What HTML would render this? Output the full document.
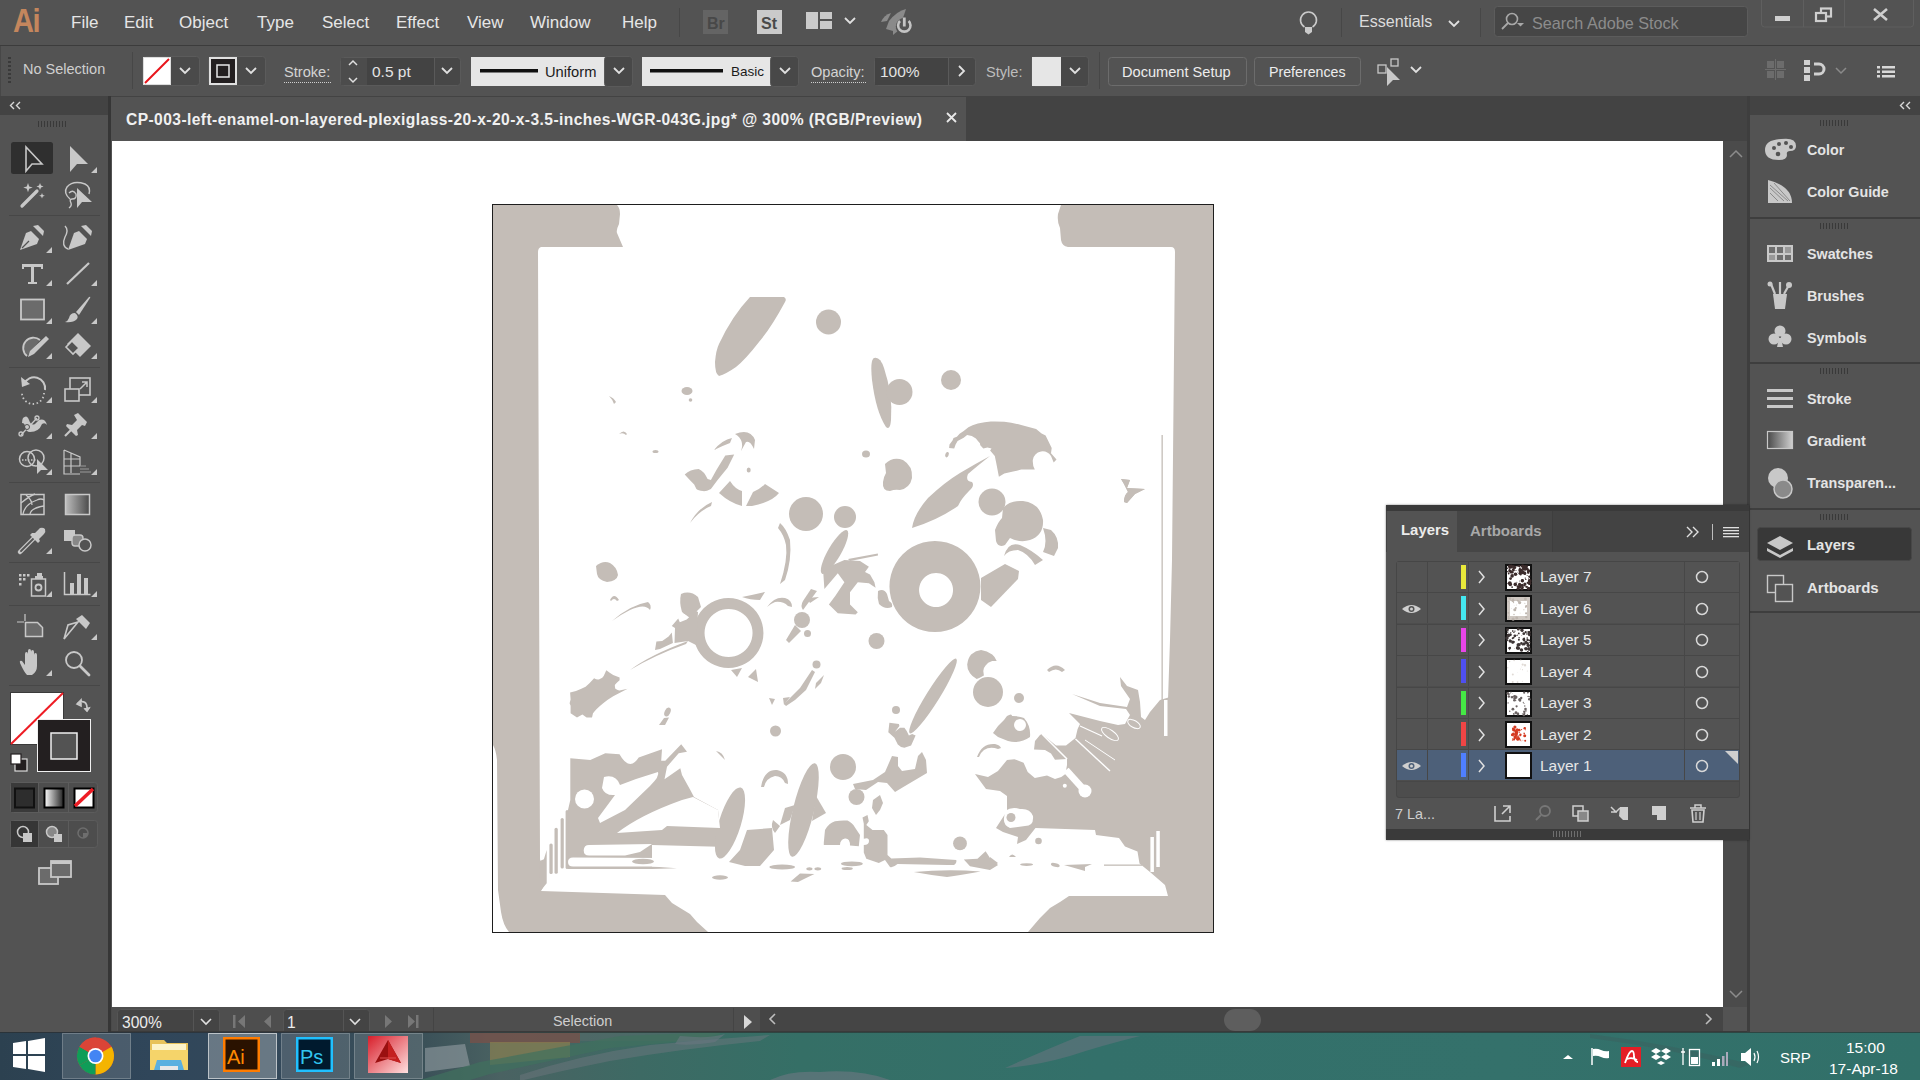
<!DOCTYPE html>
<html><head><meta charset="utf-8">
<style>
*{margin:0;padding:0;box-sizing:border-box}
html,body{width:1920px;height:1080px;overflow:hidden;background:#535353;font-family:"Liberation Sans",sans-serif;color:#d8d8d8}
.a{position:absolute}
.t{position:absolute;white-space:nowrap;line-height:1}
.menu{font-size:17px;color:#e6e6e6;top:14px}
.cb{font-size:14.6px;color:#d4d4d4}
.fld{position:absolute;background:#464646;border:1px solid #5c5c5c;border-radius:3px}
.dd{position:absolute;background:#484848}
.btn{position:absolute;border:1px solid #6a6a6a;border-radius:3px;background:#535353}
.dock{font-size:14.3px;font-weight:bold;color:#e4e4e4}
svg{position:absolute;overflow:visible}
</style></head><body>

<!-- MENU BAR -->
<div class="a" style="left:0;top:0;width:1920px;height:45px;background:#535353"></div>
<div class="a" style="left:0;top:45px;width:1920px;height:1px;background:#3c3c3c"></div>
<div class="t" style="left:13px;top:4px;font-size:30px;font-weight:bold;color:#c4865d;letter-spacing:-1.5px;transform:scale(0.97,1.1);transform-origin:0 0">Ai</div>
<div class="t menu" style="left:71px">File</div>
<div class="t menu" style="left:124px">Edit</div>
<div class="t menu" style="left:179px">Object</div>
<div class="t menu" style="left:257px">Type</div>
<div class="t menu" style="left:322px">Select</div>
<div class="t menu" style="left:396px">Effect</div>
<div class="t menu" style="left:467px">View</div>
<div class="t menu" style="left:530px">Window</div>
<div class="t menu" style="left:622px">Help</div>

<!-- CONTROL BAR -->
<div class="a" style="left:0;top:46px;width:1920px;height:50px;background:#535353"></div>
<div class="a" style="left:0;top:46px;width:1px;height:50px;background:#474747"></div>
<svg style="left:0;top:0" width="1920" height="100">
 <g fill="#3a3a3a"><rect x="8" y="57" width="3" height="2"/><rect x="8" y="61" width="3" height="2"/><rect x="8" y="65" width="3" height="2"/><rect x="8" y="69" width="3" height="2"/><rect x="8" y="73" width="3" height="2"/><rect x="8" y="77" width="3" height="2"/><rect x="8" y="81" width="3" height="2"/></g>
 <rect x="132" y="52" width="1" height="37" fill="#474747"/>
 <rect x="1099" y="52" width="1" height="37" fill="#474747"/>
 <!-- fill swatch -->
 <rect x="142.5" y="56.5" width="57" height="29" rx="3" fill="#4a4a4a" stroke="#5b5b5b"/>
 <rect x="143" y="57" width="28" height="28" fill="#dcdcdc"/>
 <rect x="144" y="58" width="26" height="26" fill="#ffffff"/>
 <line x1="145" y1="83" x2="169" y2="59" stroke="#e8141a" stroke-width="2"/>
 <path d="M180 68 l5 5 l5 -5" fill="none" stroke="#e0e0e0" stroke-width="1.8"/>
 <!-- stroke swatch -->
 <rect x="208.5" y="56.5" width="57" height="29" rx="3" fill="#4a4a4a" stroke="#5b5b5b"/>
 <rect x="209" y="57" width="28" height="28" fill="#e0e0e0"/>
 <rect x="211" y="59" width="24" height="24" fill="#231f20"/>
 <rect x="217" y="65" width="12" height="12" fill="none" stroke="#e8e8e8" stroke-width="1.5"/>
 <path d="M246 68 l5 5 l5 -5" fill="none" stroke="#e0e0e0" stroke-width="1.8"/>
 <!-- stroke label underline -->
 <line x1="284" y1="82.5" x2="331" y2="82.5" stroke="#cfcfcf" stroke-width="1" stroke-dasharray="1,1"/>
 <!-- stepper + field -->
 <rect x="340.5" y="57.5" width="120" height="28" rx="3" fill="#474747" stroke="#5a5a5a"/>
 <rect x="341" y="58" width="26" height="27" fill="#4c4c4c"/>
 <rect x="367" y="58" width="1" height="27" fill="#5a5a5a"/>
 <rect x="367" y="58" width="67" height="27" fill="#434343"/>
 <rect x="434" y="58" width="1" height="27" fill="#5a5a5a"/>
 <path d="M349 65 l4 -4 l4 4 M349 78 l4 4 l4 -4" fill="none" stroke="#e0e0e0" stroke-width="1.5"/>
 <path d="M442 68 l5 5 l5 -5" fill="none" stroke="#e0e0e0" stroke-width="1.8"/>
 <!-- uniform -->
 <rect x="471" y="57" width="134" height="29" fill="#e6e6e6"/>
 <rect x="604.5" y="56.5" width="28" height="30" rx="3" fill="#484848" stroke="#5a5a5a"/>
 <rect x="480" y="69" width="58" height="3.5" fill="#111"/>
 <path d="M614 68 l5 5 l5 -5" fill="none" stroke="#e0e0e0" stroke-width="1.8"/>
 <!-- basic -->
 <rect x="642" y="57" width="129" height="29" fill="#e6e6e6"/>
 <rect x="770.5" y="56.5" width="28" height="30" rx="3" fill="#484848" stroke="#5a5a5a"/>
 <rect x="650" y="69" width="73" height="3.5" fill="#111"/>
 <path d="M780 68 l5 5 l5 -5" fill="none" stroke="#e0e0e0" stroke-width="1.8"/>
 <line x1="811" y1="82.5" x2="866" y2="82.5" stroke="#cfcfcf" stroke-width="1" stroke-dasharray="1,1"/>
 <!-- opacity field -->
 <rect x="874.5" y="57.5" width="101" height="28" rx="3" fill="#474747" stroke="#5a5a5a"/>
 <rect x="875" y="58" width="73" height="27" fill="#434343"/>
 <rect x="948" y="58" width="1" height="27" fill="#5a5a5a"/>
 <path d="M959 66 l5 5 l-5 5" fill="none" stroke="#e0e0e0" stroke-width="1.8"/>
 <!-- style -->
 <rect x="1031.5" y="56.5" width="57" height="30" rx="3" fill="#484848" stroke="#5a5a5a"/>
 <rect x="1032" y="57" width="29" height="29" fill="#e6e6e6"/>
 <path d="M1070 68 l5 5 l5 -5" fill="none" stroke="#e0e0e0" stroke-width="1.8"/>
 <!-- buttons -->
 <rect x="1108.5" y="57.5" width="138" height="28" rx="3" fill="#535353" stroke="#6c6c6c"/>
 <rect x="1254.5" y="57.5" width="106" height="28" rx="3" fill="#535353" stroke="#6c6c6c"/>
 <!-- isolate icon -->
 <g fill="none" stroke="#c8c8c8" stroke-width="1.3"><rect x="1378" y="65" width="8" height="8"/><rect x="1391" y="59" width="7" height="7"/></g>
 <path d="M1387 67 l13 13 l-7 0 l-6 6 z" fill="#c8c8c8"/>
 <path d="M1411 67 l5 5 l5 -5" fill="none" stroke="#e0e0e0" stroke-width="1.8"/>
 <!-- right icons -->
 <g fill="#6c6c6c"><rect x="1767" y="61" width="7" height="7"/><rect x="1777" y="61" width="7" height="7"/><rect x="1767" y="71" width="7" height="7"/><rect x="1777" y="71" width="7" height="7"/><rect x="1765" y="69" width="21" height="1"/><rect x="1775" y="59" width="1" height="21"/></g>
 <g fill="#d0d0d0"><rect x="1804" y="60" width="6" height="5"/><rect x="1804" y="67" width="6" height="6"/><rect x="1804" y="75" width="6" height="6"/></g>
 <path d="M1814 64 h5 a5 5 0 0 1 0 10 h-5" fill="none" stroke="#d0d0d0" stroke-width="3"/>
 <path d="M1836 68 l5 5 l5 -5" fill="none" stroke="#8a8a8a" stroke-width="1.5"/>
 <g fill="#d8d8d8"><rect x="1877" y="66" width="3" height="2.5"/><rect x="1877" y="70.5" width="3" height="2.5"/><rect x="1877" y="75" width="3" height="2.5"/><rect x="1882" y="66" width="13" height="2.5"/><rect x="1882" y="70.5" width="13" height="2.5"/><rect x="1882" y="75" width="13" height="2.5"/></g>
 <!-- menu bar icons -->
 <rect x="679" y="8" width="1" height="29" fill="#474747"/>
 <rect x="703" y="10" width="25" height="24" fill="#646464"/>
 <text x="707" y="29" font-family="Liberation Sans" font-size="16" font-weight="bold" fill="#484848">Br</text>
 <rect x="757" y="10" width="25" height="24" fill="#cacaca"/>
 <text x="761" y="29" font-family="Liberation Sans" font-size="16" font-weight="bold" fill="#4a4a4a">St</text>
 <g fill="#cacaca"><rect x="806" y="12" width="12" height="17"/><rect x="820" y="12" width="12" height="7"/><rect x="820" y="21" width="12" height="8"/></g>
 <path d="M845 18 l5 5 l5 -5" fill="none" stroke="#e0e0e0" stroke-width="1.8"/>
 <path d="M906 9 Q897 11 889 21 L886 29 L893 31 Q902 24 906 9 Z" fill="#8a8a8a"/>
 <path d="M881 22 Q884 15 891 13 L887 21 Z" fill="#8a8a8a"/>
 <path d="M893 27 L899 30 L893 35 Z" fill="#8a8a8a"/>
 <circle cx="904.3" cy="26.4" r="8.5" fill="#535353"/>
 <path d="M900 21 A6.2 6.2 0 1 0 908.6 21" fill="none" stroke="#c4c4c4" stroke-width="2.6"/>
 <rect x="902.9" y="17.5" width="2.8" height="9" fill="#c4c4c4"/>
 <!-- lightbulb -->
 <path d="M1304.5 27 A8 8 0 1 1 1312.5 27" fill="none" stroke="#cacaca" stroke-width="1.6"/>
 <path d="M1305 27 h7 v5 l-3.5 2.5 l-3.5 -2.5 z" fill="#cacaca"/>
 <rect x="1341" y="8" width="1" height="29" fill="#474747"/>
 <path d="M1449 21 l5 5 l5 -5" fill="none" stroke="#e0e0e0" stroke-width="1.8"/>
 <rect x="1480" y="8" width="1" height="29" fill="#474747"/>
 <rect x="1494.5" y="6.5" width="253" height="30" rx="3" fill="#464646" stroke="#5c5c5c"/>
 <circle cx="1512" cy="19" r="5.5" fill="none" stroke="#a8a8a8" stroke-width="1.6"/>
 <line x1="1508" y1="23" x2="1502" y2="29" stroke="#a8a8a8" stroke-width="1.8"/>
 <path d="M1517 23 h7 l-3.5 3.5z" fill="#a8a8a8"/>
 <!-- window controls -->
 <path d="M1761.5 0 v24 a3 3 0 0 0 3 3 h146 a3 3 0 0 0 3 -3 v-24" fill="none" stroke="#5f5f5f"/>
 <rect x="1803" y="0" width="1" height="27" fill="#5f5f5f"/>
 <rect x="1844" y="0" width="1" height="27" fill="#5f5f5f"/>
 <rect x="1775" y="16" width="15" height="5" fill="#cfcfcf"/>
 <g fill="none" stroke="#cfcfcf" stroke-width="2.2"><rect x="1821" y="8.5" width="10" height="8"/><rect x="1816" y="13" width="10" height="8" fill="#535353"/></g>
 <path d="M1874 9 l13 11 M1887 9 l-13 11" stroke="#cfcfcf" stroke-width="2.6"/>
</svg>
<div class="t cb" style="left:23px;top:62px;font-size:14.5px;color:#cfcfcf">No Selection</div>
<div class="t cb" style="left:284px;top:65px">Stroke:</div>
<div class="t cb" style="left:372px;top:64px;font-size:15.5px;color:#e4e4e4">0.5 pt</div>
<div class="t cb" style="left:545px;top:65px;color:#1a1a1a;font-size:14.7px">Uniform</div>
<div class="t cb" style="left:731px;top:65px;color:#1a1a1a;font-size:13.5px">Basic</div>
<div class="t cb" style="left:811px;top:65px">Opacity:</div>
<div class="t cb" style="left:880px;top:64px;font-size:15.5px;color:#e4e4e4">100%</div>
<div class="t cb" style="left:986px;top:65px;color:#bdbdbd">Style:</div>
<div class="t cb" style="left:1122px;top:65px;color:#ededed">Document Setup</div>
<div class="t cb" style="left:1269px;top:65px;color:#ededed;font-size:14.2px">Preferences</div>
<div class="t" style="left:1359px;top:13px;font-size:16.1px;color:#dcdcdc">Essentials</div>
<div class="t" style="left:1532px;top:15px;font-size:16.2px;color:#8c8c8c">Search Adobe Stock</div>

<!-- LEFT TOOLS PANEL -->
<div class="a" style="left:0;top:96px;width:108px;height:19px;background:#434343"></div>
<div class="a" style="left:0;top:115px;width:108px;height:917px;background:#535353"></div>
<div class="a" style="left:108px;top:96px;width:3px;height:936px;background:#363636"></div>
<svg style="left:0;top:0" width="110" height="1032">
 <path d="M14 102 l-3.5 3.5 l3.5 3.5 M20 102 l-3.5 3.5 l3.5 3.5" fill="none" stroke="#d8d8d8" stroke-width="1.4"/>
 <g fill="#393939"><rect x="38" y="121" width="1" height="6"/><rect x="41" y="121" width="1" height="6"/><rect x="44" y="121" width="1" height="6"/><rect x="47" y="121" width="1" height="6"/><rect x="50" y="121" width="1" height="6"/><rect x="53" y="121" width="1" height="6"/><rect x="56" y="121" width="1" height="6"/><rect x="59" y="121" width="1" height="6"/><rect x="62" y="121" width="1" height="6"/><rect x="65" y="121" width="1" height="6"/></g>
 <g fill="#474747"><rect x="9" y="215" width="91" height="1"/><rect x="9" y="367" width="91" height="1"/><rect x="9" y="482" width="91" height="1"/><rect x="9" y="562" width="91" height="1"/><rect x="9" y="605" width="91" height="1"/><rect x="9" y="685" width="91" height="1"/></g>
 <rect x="11" y="142" width="42" height="32" rx="2.5" fill="#2f2f2f"/>
 <g fill="#c8c8c8" stroke="none">
  <!-- corner triangles -->
  <path d="M97 167 v6 h-6z M52 247 v6 h-6z M97 280 v6 h-6z M52 280 v6 h-6z M52 318 v6 h-6z M97 318 v6 h-6z M52 353 v6 h-6z M97 353 v6 h-6z M52 397 v6 h-6z M97 397 v6 h-6z M52 433 v6 h-6z M97 433 v6 h-6z M52 469 v6 h-6z M97 469 v6 h-6z M52 548 v6 h-6z M52 591 v6 h-6z M97 591 v6 h-6z M97 634 v6 h-6z M52 670 v6 h-6z"/>
 </g>
 <!-- selection -->
 <path d="M26 147 v24 l6 -7 h10 z" fill="none" stroke="#c8c8c8" stroke-width="1.6" stroke-linejoin="miter"/>
 <path d="M70 146 v26 l7 -8 h11 z" fill="#c8c8c8"/>
 <!-- magic wand -->
 <path d="M22 206 l15 -15" stroke="#c8c8c8" stroke-width="3.2" stroke-linecap="round"/>
 <path d="M28 183 l1.2 3.5 3.5 1 -3.5 1.2 -1.2 3.5 -1.2 -3.5 -3.5 -1.2 3.5 -1z M40 183 l1 2.5 2.5 1 -2.5 1 -1 2.5 -1 -2.5 -2.5 -1 2.5 -1z M42 193 l0.8 2 2 0.8 -2 0.8 -0.8 2 -0.8 -2 -2 -0.8 2 -0.8z" fill="#c8c8c8"/>
 <!-- lasso -->
 <path d="M70 199 q-7 -6 -3 -12 q6 -7 18 -3 q6 3 4 10 M69 193 q4 -4 7 1 q1 5 -4 5 q-3 0 -1 4 q1 3 -2 5" fill="none" stroke="#c8c8c8" stroke-width="1.4"/>
 <path d="M77 188 v20 l5 -6 h10 z" fill="#c8c8c8"/>
 <!-- pen -->
 <g fill="#c8c8c8"><path d="M33 226 l5 -1 l6 6 l-1 5 z"/><path d="M31 231 l8 8 l-2 5 l-17 6 l6 -17 z"/></g>
 <path d="M22 248 l7 -7" stroke="#535353" stroke-width="1.2"/>
 <!-- curvature pen -->
 <g fill="#c8c8c8"><path d="M84 226 l5 -1 l6 6 l-1 5 z" transform="translate(-3,0)"/><path d="M79 231 l8 8 l-2 5 l-17 6 l6 -17 z" transform="translate(0,0)"/></g>
 <path d="M65 226 q4 4 0 11 q-4 9 3 12" fill="none" stroke="#c8c8c8" stroke-width="1.4"/>
 <!-- type -->
 <path d="M22 264 h21 v5 h-2 v-2 h-7 v15 h3 v2 h-9 v-2 h3 v-15 h-7 v2 h-2z" fill="#c8c8c8"/>
 <!-- line -->
 <path d="M67 284 l22 -21" stroke="#c8c8c8" stroke-width="2.2"/>
 <!-- rect -->
 <rect x="21" y="299.5" width="23" height="20" fill="#6b6b6b" stroke="#c8c8c8" stroke-width="1.8"/>
 <!-- paintbrush -->
 <path d="M90 298 q1 -2 -1 -1 l-13 15 l3 3 z" fill="#c8c8c8"/>
 <path d="M75 313 q-5 0 -6 5 q-1 3 -4 4 q8 1 12 -3 q2 -3 -2 -6z" fill="#c8c8c8"/>
 <!-- shaper -->
 <path d="M27 356 a10 10 0 1 1 13 -16" fill="#6b6b6b" stroke="#c8c8c8" stroke-width="1.8"/>
 <path d="M46 336 l3 3 l-15 15 l-6 3 l2 -6z" fill="#c8c8c8"/>
 <!-- eraser -->
 <path d="M78 333 l13 13 l-11 11 l-13 -13z" fill="#c8c8c8"/>
 <path d="M66 347 l6 -6 l7 7 l-6 6z" fill="#535353" stroke="#c8c8c8" stroke-width="1.6"/>
 <!-- rotate -->
 <path d="M24 384 a11 11 0 0 1 21 6" fill="none" stroke="#c8c8c8" stroke-width="2"/>
 <path d="M21 377 l1 10 l8 -3z" fill="#c8c8c8"/>
 <path d="M44 393 a11 11 0 0 1 -22 0" fill="none" stroke="#c8c8c8" stroke-width="1.8" stroke-dasharray="1.5,2.5"/>
 <!-- scale -->
 <rect x="70" y="378" width="20" height="17" fill="none" stroke="#c8c8c8" stroke-width="1.6"/>
 <rect x="65" y="389" width="14" height="12" fill="#535353" stroke="#c8c8c8" stroke-width="1.6"/>
 <path d="M80 389 l7 -7 M82 382 h5 v5" fill="none" stroke="#c8c8c8" stroke-width="1.5"/>
 <!-- puppet/width -->
 <path d="M23 418 q4 -4 6 2 q2 6 6 4 l4 -4 q6 -2 8 5 q-2 -3 -5 -1 q-3 8 -12 8 q-4 0 -5 -5 q0 -4 -3 -4 q0 -3 1 -5z" fill="#c8c8c8"/>
 <path d="M21 435 l16 -17" stroke="#c8c8c8" stroke-width="1.3"/>
 <circle cx="21" cy="434" r="2" fill="none" stroke="#c8c8c8" stroke-width="1.3"/>
 <circle cx="37" cy="418" r="2" fill="none" stroke="#c8c8c8" stroke-width="1.3"/>
 <circle cx="27" cy="427" r="2.5" fill="none" stroke="#535353" stroke-width="1"/>
 <!-- pin -->
 <path d="M74 415 l4 -2 l9 9 l-2 4 l-3 -1 l-5 5 l1 5 l-2 1 l-10 -10 l1 -2 l5 1 l5 -5z" fill="#c8c8c8"/>
 <path d="M65 436 l6 -6" stroke="#c8c8c8" stroke-width="2.2"/>
 <!-- shape builder -->
 <circle cx="27" cy="459" r="7.5" fill="none" stroke="#c8c8c8" stroke-width="1.5"/>
 <circle cx="36" cy="458" r="8" fill="none" stroke="#c8c8c8" stroke-width="1.5"/>
 <path d="M22 460 h14" stroke="#c8c8c8" stroke-width="1.4" stroke-dasharray="1.5,1.5"/>
 <path d="M37 459 v15 l4 -4 h7z" fill="#c8c8c8"/>
 <!-- perspective -->
 <path d="M64 450 v24 h16 M64 450 l16 7 v9 M64 459 h16 M64 466 h16 M71 453 v20" fill="none" stroke="#c8c8c8" stroke-width="1.2"/>
 <path d="M80 466 h6 M80 469 h9 M80 472 h11" stroke="#9a9a9a" stroke-width="1"/>
 <!-- mesh -->
 <rect x="21" y="494.5" width="23" height="20" fill="none" stroke="#c8c8c8" stroke-width="1.5"/>
 <path d="M21 503 q10 -8 14 -9 M23 514 q2 -10 14 -14 q4 -2 7 0 M30 514 q1 -6 14 -8 M26 495 q6 5 6 10" fill="none" stroke="#c8c8c8" stroke-width="1.3"/>
 <!-- gradient -->
 <defs><linearGradient id="tg" x1="0" x2="1"><stop offset="0" stop-color="#bdbdbd"/><stop offset="1" stop-color="#4a4a4a"/></linearGradient></defs>
 <rect x="65.5" y="494.5" width="24" height="20" fill="url(#tg)" stroke="#c8c8c8" stroke-width="1.5"/>
 <!-- eyedropper -->
 <path d="M20 552 l14 -14" stroke="#c8c8c8" stroke-width="4.5" stroke-linecap="round"/>
 <path d="M21 551 l13 -13" stroke="#535353" stroke-width="1.8" stroke-linecap="round"/>
 <path d="M35 533 l5 -5 q3 -1 5 1 q1 3 -1 5 l-5 5 l1 2 l-2 2 l-8 -8 l2 -2z" fill="#c8c8c8"/>
 <!-- blend -->
 <rect x="64" y="530" width="11" height="11" fill="#c8c8c8"/>
 <rect x="72" y="535" width="11" height="11" rx="3" fill="#888" stroke="#c8c8c8" stroke-width="1.4"/>
 <circle cx="85" cy="545" r="6" fill="#535353" stroke="#c8c8c8" stroke-width="1.5"/>
 <!-- symbol sprayer -->
 <g fill="#c8c8c8"><rect x="19" y="574" width="2.5" height="2.5"/><rect x="23" y="574" width="2.5" height="2.5"/><rect x="27" y="574" width="2.5" height="2.5"/><rect x="19" y="578" width="2.5" height="2.5"/><rect x="23" y="578" width="2.5" height="2.5"/><rect x="19" y="583" width="2.5" height="2.5"/><rect x="37" y="573" width="5" height="3"/></g>
 <rect x="31.5" y="579" width="14" height="17" fill="none" stroke="#c8c8c8" stroke-width="1.5"/>
 <rect x="35" y="576" width="8" height="3" fill="#c8c8c8"/>
 <circle cx="38.5" cy="587.5" r="3" fill="none" stroke="#c8c8c8" stroke-width="1.8"/>
 <!-- column graph -->
 <path d="M64.5 572 v22.5 h26" fill="none" stroke="#c8c8c8" stroke-width="1.5"/>
 <g fill="#c8c8c8"><rect x="70" y="583" width="4" height="11"/><rect x="77" y="574" width="4" height="20"/><rect x="84" y="578" width="4" height="16"/></g>
 <!-- artboard -->
 <path d="M17 622 h7 M25 614 v7" stroke="#c8c8c8" stroke-width="1.2"/>
 <path d="M25.5 622.5 h12 l5 5 v9 h-17z" fill="#6b6b6b" stroke="#c8c8c8" stroke-width="1.5"/>
 <!-- slice/knife -->
 <path d="M64 639 l4 -14 l10 -3 z" fill="none" stroke="#c8c8c8" stroke-width="1.6"/>
 <path d="M76 619 l6 -4 l8 8 l-4 6 z" fill="#c8c8c8"/>
 <!-- hand -->
 <path d="M27 675 q-3 -3 -7 -12 q-1 -3 2 -2 l3 4 v-11 q0 -2 1.5 -2 q1.5 0 1.5 2 v8 v-11 q0 -2 1.5 -2 q1.5 0 1.5 2 v11 v-10 q0 -2 1.5 -2 q1.5 0 1.5 2 v10 v-7 q0 -2 1.5 -2 q1.5 0 1.5 2 v11 q0 6 -5 9z" fill="#c8c8c8"/>
 <!-- zoom -->
 <circle cx="74" cy="660" r="8" fill="none" stroke="#c8c8c8" stroke-width="1.8"/>
 <path d="M80 666 l9 9" stroke="#c8c8c8" stroke-width="2.8" stroke-linecap="round"/>
 <!-- fill/stroke -->
 <rect x="10.5" y="692.5" width="53" height="52" fill="#ffffff" stroke="#3a3a3a"/>
 <path d="M11 744 l52 -51" stroke="#ee1c24" stroke-width="2"/>
 <rect x="37.5" y="719.5" width="53" height="52" fill="#231f20" stroke="#f0f0f0"/>
 <rect x="51" y="733" width="26" height="26" fill="#535353" stroke="#f0f0f0" stroke-width="1.5"/>
 <path d="M79 702 q8 -2 8 6 M77 704 l4 -4 l0 6z M85 709 l4 -1 l-2 3z" fill="none" stroke="#c8c8c8" stroke-width="1.6"/>
 <path d="M81 700 l-4 3 l4 3z M84 708 l6 0 l-3 4z" fill="#c8c8c8"/>
 <rect x="15" y="759" width="12" height="12" fill="#231f20" stroke="#dcdcdc" stroke-width="1.2"/>
 <rect x="11" y="754" width="10" height="10" fill="#ffffff" stroke="#231f20" stroke-width="1.2"/>
 <!-- mode row -->
 <rect x="10.5" y="782.5" width="87" height="30" rx="3" fill="#4d4d4d" stroke="#5c5c5c"/>
 <rect x="11" y="783" width="27" height="29" fill="#3a3a3a"/>
 <rect x="38" y="783" width="1" height="29" fill="#5c5c5c"/><rect x="68" y="783" width="1" height="29" fill="#5c5c5c"/>
 <rect x="15" y="788.5" width="19" height="19" fill="#2d2d2d" stroke="#111" stroke-width="2"/>
 <rect x="44.5" y="788.5" width="19" height="19" fill="url(#tg2)" stroke="#000" stroke-width="2"/>
 <defs><linearGradient id="tg2" x1="0" x2="1"><stop offset="0" stop-color="#fff"/><stop offset="1" stop-color="#222"/></linearGradient></defs>
 <rect x="74.5" y="788.5" width="19" height="19" fill="#fff" stroke="#000" stroke-width="2"/>
 <path d="M75 806 l18 -17" stroke="#ee1c24" stroke-width="3.5"/>
 <!-- draw mode -->
 <rect x="10.5" y="820.5" width="87" height="27" rx="3" fill="#4d4d4d" stroke="#5c5c5c"/>
 <rect x="11" y="821" width="27" height="26" fill="#363636"/>
 <rect x="38" y="821" width="1" height="26" fill="#5c5c5c"/><rect x="68" y="821" width="1" height="26" fill="#5c5c5c"/>
 <circle cx="23" cy="832" r="5.5" fill="none" stroke="#c8c8c8" stroke-width="1.5"/><rect x="23" y="833" width="9" height="9" fill="#c8c8c8"/>
 <circle cx="52" cy="832" r="5.5" fill="#888" stroke="#c8c8c8" stroke-width="1.5"/><rect x="54" y="834" width="8" height="8" fill="#c8c8c8"/>
 <circle cx="83" cy="833" r="5" fill="none" stroke="#6e6e6e" stroke-width="1.5"/><path d="M83 833 h5 a5 5 0 0 1 -5 5z" fill="#6e6e6e"/>
 <!-- screen mode -->
 <rect x="39" y="868" width="19" height="16" fill="#6b6b6b" stroke="#c8c8c8" stroke-width="1.8"/>
 <rect x="51" y="861" width="20" height="16" fill="#6b6b6b" stroke="#c8c8c8" stroke-width="1.8"/>
 <rect x="51" y="861" width="20" height="3" fill="#c8c8c8"/>
</svg>

<!-- DOC TAB BAR -->
<div class="a" style="left:111px;top:96px;width:1638px;height:45px;background:#434343"></div>
<div class="a" style="left:111px;top:97px;width:855px;height:44px;background:#535353"></div>
<div class="t" style="left:126px;top:112px;font-size:15.6px;font-weight:bold;color:#f0f0f0;letter-spacing:0.42px">CP-003-left-enamel-on-layered-plexiglass-20-x-20-x-3.5-inches-WGR-043G.jpg* @ 300% (RGB/Preview)</div>

<!-- CANVAS -->
<div class="a" style="left:112px;top:141px;width:1612px;height:866px;background:#ffffff"></div>
<!-- ARTWORK -->
<svg style="left:0;top:0" width="1920" height="1080">
<g fill="#c4bdb7">
 <!-- frame top-left + left bar -->
 <path d="M493 205 L617 205 Q620 208 620 214 L619 224 Q616 230 617 233 L623 247 L541 247 Q538 248 538 252 L539 560 L540 859 L545 884 L541 891 L665 895 L672 903 L690 914 L697 922 L708 932 L509 932 Q503 925 501 912 L498 890 L497 760 Q496 750 493 745 Z"/>
 <!-- frame top-right + right bar -->
 <path d="M1061 205 L1213 205 L1213 932 L1028 932 L1040 918 L1050 908 L1060 902 L1069 896 L1168 896 L1167 860 L1168 700 L1170 640 L1172 560 L1175 252 Q1175 247 1171 247 L1068 247 Q1062 246 1061 240 L1060 228 Q1057 222 1058 214 Z"/>
 <!-- leaf top -->
 <path d="M750 297 L784 297 Q787 299 785 302 Q771 328 759 342 Q745 360 736 367 Q726 374 719 376 Q715 374 715 362 Q716 350 719 344 Q732 316 750 297 Z"/>
 <circle cx="828.5" cy="322" r="12.5"/>
 <path d="M874 358 Q880 356 884 368 Q893 395 891 420 Q890 431 886 427 Q876 412 872 380 Q870 360 874 358Z"/>
 <circle cx="899.5" cy="392" r="13"/>
 <circle cx="951" cy="380" r="10"/>
 <ellipse cx="687" cy="391" rx="5.5" ry="4"/>
 <circle cx="690.5" cy="400" r="1.8"/>
 <ellipse cx="866" cy="454" rx="4" ry="3.5"/>
 <path d="M885 464 Q893 456 903 460 Q913 466 912 478 Q910 488 900 490 Q895 489 890 491 Q882 491 883 482 Q884 476 886 473 Z"/>
 <!-- big splash top right -->
 <path d="M949.1 447.9 L949.5 444.5 L952.5 440.5 L953.5 438.1 L956.9 436.7 L959.6 433.7 L963.7 431 L968.4 427.3 Q972 425 977.9 423.5 Q985 421.8 990.8 421.5 Q998 421.3 1004.3 421.8 Q1013 423 1021.2 424.9 L1036.1 429 L1041.6 433.4 L1045.6 435.4 L1051.7 447.9 L1051 453.3 L1056.5 459.4 L1053.7 462.5 L1051 456 Q1047 450.5 1041 451.5 Q1034 453 1032.8 460 Q1032.5 466 1034.8 469.6 L1021.2 469.6 L1013.1 471.6 L1004.3 473.6 L998.9 476.7 L996.2 462.8 L994.8 456 L990.1 450.6 L991.5 448.6 L987.4 447.6 L983.3 448.6 L980.3 445.2 L979.9 443.2 L977.9 441.1 L975.9 438.4 L971.8 436.1 L967.1 435 L963.7 437.8 L957.6 441.1 L955.6 444.5 L954.2 448.6 Z"/>
 <ellipse cx="947" cy="454.7" rx="1.7" ry="2.8" transform="rotate(20 947 454.7)"/>
 <!-- diagonal streak -->
 <path d="M912 528 Q914 514 928 498 Q945 482 960 473 Q975 464 990 456 Q976 467 968 474 Q965 481 972 482 Q975 486 969 491 Q961 499 958 506 Q938 520 912 528 Z"/>
 <circle cx="806" cy="514" r="17"/>
 <circle cx="845" cy="517" r="11"/>
 <circle cx="992" cy="502" r="13.5"/>
 <path d="M1003 508 Q1010 500 1023 501 Q1040 503 1043 520 Q1044 535 1030 540 Q1020 543 1010 538 L1005 545 Q998 548 996 541 L995 530 Q998 522 1002 518 Z"/>
 <path d="M1043 528 L1051 530 Q1059 537 1058 548 L1054 556 L1043 552 Q1048 542 1043 528Z"/>
 <path d="M1004 556 Q1008 541 1020 545 Q1032 550 1043 560 L1035 565 Q1028 553 1018 550 Q1008 550 1004 556Z"/>
 <path d="M981 578 L1005 564 L1019 571 L1018 579 L991 607 L981 600 Z"/>
 <path d="M1121 479 L1130 480 L1127 488 L1145 489 L1135 494 L1127 503 L1124 502 Q1124 495 1128 492 L1124 484 Z"/>
 <!-- disc with hole -->
 <path fill-rule="evenodd" d="M935 541 A45.5 45.5 0 1 1 934.9 541 Z M936 573 A17 17 0 1 0 936.1 573 Z"/>
 <!-- left-middle cluster -->
 <ellipse cx="834.5" cy="552" rx="25" ry="6.5" transform="rotate(120 834.5 552)"/>
 <path d="M823.3 573.3 L828.9 566.7 L844.4 560 L860 561.1 L868.9 566.7 L865 572 L870 574.4 L874.4 582.2 L875.6 587.8 L868.9 583.3 L857.8 582.2 L850 592.2 L850 604.4 L857.8 612.2 L855.6 614.4 L837.8 613.3 L828.9 604.4 L835.6 595.6 L844.4 582.2 L837.8 573.3 L824.4 588.9 Z"/>
 <path d="M848 559 L877.8 553.5 L878 555.5 L850 561 Z"/>
 <path d="M769 698 L775 699 L772 705 Z"/>
 <path d="M783 698 L790 697 L784 705 Z"/>
 <path d="M735 434 Q750 428 755 440 L754 449 Q750 440 746 442 L741 451 Q745 440 735 434Z"/>
 <path d="M714 450 Q722 440 732 438 L730 443 Q722 446 714 450Z"/>
 <path d="M684.7 474.4 Q690 469 698.7 468.9 Q704 471 707.6 478.9 L710.9 480 L716.4 470 L725.3 455.6 L734.2 454.4 L727.6 467.8 L717.6 480 L710.9 488.9 Q706 491.5 703.1 491.1 Q698 490.5 696.4 488.9 L694.2 484.4 L689.8 480 Z"/>
 <path d="M708.5 478 L712 469 L716 464 L714 472 Z" fill="#ffffff"/>
 <path d="M609 396 Q614 398 616 402 L614 404 Q613 400 609 396Z"/>
 <path d="M619 434 Q624 429 627 434 L626 435 Q623 432 619 434Z"/>
 <ellipse cx="655.5" cy="451.5" rx="3" ry="1.6"/>
 <ellipse cx="748.7" cy="470" rx="2" ry="2.5"/>
 <path d="M719 493 L730 481 Q735 489 742 491 L742 506 Q730 503 719 493Z"/>
 <path d="M746 506 L753 492 Q760 489 765 484 L779 493 Q772 502 752 506 Z"/>
 <path d="M690 523 Q698 508 712 502 L711 506 Q699 511 690 523Z"/>
 <path d="M596 566 Q603 560 610 563 Q617 567 618 575 Q617 581 607 582 Q598 580 597 574 Z"/>
 <path d="M610 600 Q614 592 619 600 L617 601 Q614 597 611 601Z"/>
 <path d="M612 621 Q630 605 648 602 Q652 605 650 610 Q645 603 630 610 Q620 615 612 621Z"/>
 <path d="M780 523 Q786 528 790 540 Q792 560 785 580 L780 584 Q788 560 786 545 Q784 535 778 528 Z"/>
 <path d="M767 607 Q775 596 785 598 Q792 600 792 607 L788 606 Q783 601 775 602 Q770 604 767 607Z"/>
 <path d="M742 597 Q752 595 765 592 L760 600 Q750 600 742 597Z"/>
 <path d="M878 591 Q884 588 887 594 L889 601 Q893 603 892 607 Q885 610 879 604 Q877 598 878 591Z"/>
 <path d="M811 589 L817 591 L803 610 Q800 606 803 601 Z"/>
 <path d="M807 598 L819 597 L810 603Z"/>
 <ellipse cx="667.5" cy="712" rx="2.8" ry="4.8" transform="rotate(25 667.5 712)"/>
 <path d="M659 725 L664 718 L669 717.5 L665 725 Z"/>
 <!-- ring -->
 <path fill-rule="evenodd" d="M728.5 598 A35 35 0 1 1 728.4 598 Z M728.5 609 A24 24 0 1 0 728.6 609 Z"/>
 <path d="M681 594 Q690 590 698 597 L701 607 L690 618 L682 612 Q679 602 681 594Z"/>
 <path d="M656.4 641.4 L662.2 640.9 L668.6 636.6 L671.8 632.4 L672.9 643 L660 649 L655 650 Z"/>
 <path d="M674.5 643 L675 628.1 L671.8 626 L678.2 618.5 L679.8 622.2 L686.7 619.6 L689.9 616.4 L683.5 613.2 L686 606 L698 612 L696 645 L688 641 Z"/>
 <path d="M630 670 Q650 655 688 641 L686 644 Q655 655 630 670Z"/>
 <path d="M570.1 692.5 L576 690.9 Q581 689 585.6 686.7 Q590 683 594.1 678.2 Q597 680 599.4 679.2 Q603 678 603.7 676 L606.3 670.2 Q610 673 613.2 675 L619.6 677.6 L619.6 680.3 Q615 684 614.8 685.6 Q615 688 615.4 688.8 Q618 690.5 619.6 690.4 L627.6 688.8 L613.2 696.3 Q607 700 602.6 703.7 Q596 709 593 713.3 L592 717.6 L586.6 717.6 L582.4 714.4 L577 717.6 L570.6 713.3 L570.6 705.8 L569.6 703.2 L570.6 699.5 Z"/>
 <path d="M731 670 L742 668 L737 677 Z"/>
 <path d="M748 677 L756 669 L758 682 Z"/>
 <circle cx="775.5" cy="731" r="5.5"/>
 <path d="M761 787 Q764 769 777 770 Q788 772 788 784 L785 783 Q782 776 775 776 Q766 778 764 787 Z"/>
 <!-- bottom-left mass -->
 <path d="M570.3 758.3 L590.3 760 L605.3 753.3 L619.5 754.2 Q629.5 772 638.7 757.5 L662 749.2 L661.2 760.8 L665.3 760.8 L681.2 744.2 L687 751.7 L678.7 753.3 L667 766.7 L664.5 779.2 L680.3 768.3 L682 775 L690.3 790 L694 797 L718 810 L720 828 L718.7 846.7 L652 845 L568 845 L568 810 L570.3 800 Z"/>
 <rect x="568" y="844" width="84" height="25"/>
 <path d="M652 866.5 L677 868.3 L652 869 Z"/>
 <path d="M539.7 861 L543.9 859.3 L546.7 850 L546.7 883.3 L540.2 891.2 Z"/>
 <rect x="549.4" y="843.5" width="3.3" height="30.5" rx="1.6"/>
 <rect x="554.5" y="827.8" width="3.3" height="46" rx="1.6"/>
 <rect x="560.6" y="818" width="3.2" height="50.5" rx="1.6"/>
 <rect x="565.6" y="810" width="3" height="59" rx="1.5"/>
 <ellipse cx="730" cy="823" rx="11" ry="37" transform="rotate(17 730 823)"/>
 <path d="M747 830 L772 828 L774 850 L760 866 L745 866 L729 862 L740 850 Z"/>
 <ellipse cx="720" cy="877.5" rx="8" ry="2.2"/>
 <path d="M716 751 Q723 752 725 760 Q720 755 716 751Z"/>
 <!-- middle bottom -->
 <circle cx="876.5" cy="641" r="8"/>
 <circle cx="802" cy="620" r="8"/>
 <path d="M795 625 L801 631 L789 643 L786 640 Z"/>
 <circle cx="807.5" cy="633.5" r="3.5"/>
 <ellipse cx="933" cy="696" rx="44" ry="6.5" transform="rotate(121.9 933 696)"/>
 <path d="M889.4 722.8 L898.9 723.9 L899.4 726.1 L895 731.7 L900 727.8 L904.4 727.8 L906.7 731.1 L908.9 735.6 L912.2 733.9 L915.6 735.6 L911.1 745.6 L904.4 747.8 Q900 747 897.8 744.4 L894.4 737.8 L888.3 732.2 Z"/>
 <circle cx="896" cy="710" r="4"/>
 <path d="M981.1 650 Q987 651 992.2 654.4 Q995.5 657 996.7 661.1 L992.2 661.1 Q987.5 662.5 985.6 665.6 Q983 668.5 983.3 671.1 L983.9 675.6 Q980 678 976.7 678.9 Q972 676.5 970 673.3 Q967 669 967.2 664.4 Q968 658 971.1 654.4 Q976 650.5 981.1 650 Z"/>
 <circle cx="988" cy="692" r="15"/>
 <circle cx="816.5" cy="664.5" r="4"/>
 <path d="M784 704 L800 688 L812 670 L815 672 L806 690 L795 700 L786 706 Z"/>
 <path d="M816 683 L824 675 L821 683 L815 689Z"/>
 <circle cx="843" cy="767" r="13"/>
 <path d="M853 784 L873 780 L885 772 L892 756 L898 757 L898 766 L902 771 L915 769 L918 756 L922 752 L926 760 L927 773 L905 786 L895 792 L887 783 L878 782 L866 790 L855 789 Z"/>
 <circle cx="856.5" cy="797" r="8"/>
 <ellipse cx="803.5" cy="810" rx="48" ry="10.5" transform="rotate(103.7 803.5 810)"/>
 <path d="M816 796 L826 813 L812 821 Z"/>
 <path d="M873 800 L880 795 L883 803 L880 810 L876 815 L872 808Z"/>
 <path d="M785 808 L795 805 L790 820 L780 825Z"/>
 <path d="M773 820 L780 826 L775 833 Q770 828 773 820Z"/>
 <!-- bottom middle row -->
 <path d="M823.8 842.5 L825 830 Q829 823 835 821.3 Q842 820 847.5 820.6 Q852 822.5 855 827.5 L860 835 L858.8 846.3 L850 845.6 Q850 838 845 838.5 Q840 839.5 840 845 L823.8 845 Z"/>
 <path d="M862.5 817.5 L867.5 815 L868.8 821.3 L866.3 825 L872.5 830 L883.8 830 L887.5 835 L887.5 855 L891.3 858.5 L920 857.5 L956.3 860 Q957 863 954 865 L947.5 865 L897.5 864 Q893 868 890 867 L885 860 L878.8 863.1 L866.3 858.8 L863.8 852.5 L863.8 845 Q869 845 869 841 Q869 837 863.8 838.8 L863.8 823.8 Z"/>
 <circle cx="960" cy="843.4" r="6.9"/>
 <path d="M963.8 859.4 L977.5 858.8 L985.6 851.3 L991.3 860 L998.1 865 L990 870 L970 866.3 Z"/>
 <path d="M913.8 872 Q947 869 980.6 871.5 Q960 875 947 877 Q930 875 913.8 872 Z"/>
 <ellipse cx="782.2" cy="867.1" rx="12.8" ry="2.5"/>
 <ellipse cx="809.4" cy="868.8" rx="3.1" ry="1.6"/>
 <ellipse cx="817.8" cy="868.8" rx="3.4" ry="1.6"/>
 <ellipse cx="851.9" cy="863.8" rx="11" ry="2.4"/>
 <ellipse cx="847.2" cy="868.4" rx="5.6" ry="1.5"/>
 <path d="M790.6 881.5 L797 876 L800 873.5 L814.4 874 Q806 878 798 882 Z"/>
 <!-- bottom right mass -->
 <path d="M1170 697 L1160 700 L1150 712 L1145 720 L1141 717 L1140 702 L1138 690 L1127 686 L1120 677 L1121 686 L1130 699 L1127 707 L1100 703 L1072 694 L1100 706 L1126 709 L1130 715 L1125 724 L1118 725 L1100 721 L1069 713 L1080 724 L1077.6 729 L1075.5 738 L1066 745.5 L1056 745.5 L1042 734 L1040 735 L1035 741 L1034 749.5 L1045 750 L1051 753.6 L1055 759.7 L1067 759 L1067 765 L1065.4 774 L1061.3 777 L1055 779 L1047 775.5 L1034.8 778 L1027.7 772 L1023.6 762.8 L1014.4 759.2 L1007 760 L1007 811 L996 828 L1003 832 L1018 837 L1017 844 L1026 840 L1035.5 828 L1095 830 L1096 835 L1119 838 L1125 846.5 L1137.5 851.5 L1139.5 863.4 L1150 872 L1165 885 L1168 896 L1170 896 Z"/>
 <path d="M1007 716 Q1012 713 1012 716 Q1020 716 1024 718 Q1031 726 1030 737 Q1020 744 1008 741 L998 737 L993 733 Q998 725 1004 720 Z"/>
 <path d="M977 757 Q982 743 995 744 Q1000 745 1001 748 L998 749 Q990 746 984 750 Q980 753 979 757 Z"/>
 <path d="M975 774 L988 777 L998 771 L1007 760 L1007 796 L1000 791 L986 789 Z"/>
 <path d="M1047 670 Q1056 661 1065 670 L1062 672 Q1056 667 1049 672 Z"/>
 <circle cx="1019" cy="698" r="5"/>
 <path d="M1121 479 L1130 480 L1127 488 L1145 489 L1135 494 L1127 503 L1124 502 Q1124 495 1128 492 L1124 484 Z"/>
 <path d="M990 857 L998 863 L990 869 Z"/>
 <path d="M1009 857 Q1012 852 1016 857 Z"/>
 <circle cx="1038.5" cy="841" r="3.3"/>
 <ellipse cx="1026.6" cy="864.6" rx="6.5" ry="1.4"/>
 <ellipse cx="1055.3" cy="865" rx="4.5" ry="1.8" transform="rotate(15 1055 865)"/>
 <path d="M1064 865 L1092 864 L1085 867 L1085 871 Z"/>
 <rect x="1104" y="864.5" width="38" height="1.3"/>
 <rect x="1161.5" y="435" width="1.3" height="300"/>
</g>
<!-- white cutouts -->
<g fill="#ffffff">
 <circle cx="1020" cy="725" r="6"/>
 <circle cx="584.5" cy="799" r="9.5"/>
 <path d="M604 777 Q616 774 620 785 L636 779 L658 772 Q660 776 650 786 L625 810 L600 823 L598 818 L615 795 Q605 796 602 788 Z"/>
 <path d="M617 833 Q640 815 682 800 L693 797 L718 810 L720 828 L667 826 L662 830 Z"/>
 <circle cx="1085" cy="791" r="6.5"/>
 <circle cx="1064.8" cy="785.7" r="2"/>
 <path d="M1005 811 Q1012 806 1020 809 Q1030 808 1033 816 Q1034 826 1025 826 L1010 828 Q1003 825 1004 818 Z"/>
 <path d="M589 845 L652 844 L640 852 L625 855.5 L589 855.5 Q583.7 855.5 583.7 850.2 Q584 845 589 845 Z"/>
 <path d="M573 857.5 L660 858 L677 866.5 L573 866.5 Q568 866.5 568 862 Q568 857.5 573 857.5 Z"/>
 <rect x="1150.4" y="837" width="3.5" height="35"/>
 <rect x="1156.3" y="831" width="3.5" height="36"/>
 <rect x="1164" y="700" width="3.5" height="36"/>
</g>
<g stroke="#ffffff" fill="none">
 <path d="M1066 770 L1085 791" stroke-width="7"/>
 <path d="M1042 734 L1067 759" stroke-width="1.6"/>
 <path d="M1075.5 739 L1110 771" stroke-width="1.4"/>
 <path d="M1080 726 L1102 736" stroke-width="1.2"/>
 <ellipse cx="1110" cy="734" rx="10" ry="4" transform="rotate(35 1110 734)" stroke-width="1"/>
 <ellipse cx="1134" cy="724" rx="7" ry="3.5" transform="rotate(30 1134 724)" stroke-width="1"/>
 <path d="M1085 740 L1115 760" stroke-width="1"/>
</g>
<g fill="#c4bdb7"><circle cx="1011" cy="817.5" r="4.5"/><ellipse cx="643" cy="861.5" rx="11" ry="2.8"/></g>
<!-- artboard border -->
<rect x="492.5" y="204.5" width="721" height="728" fill="none" stroke="#1e1e1e" stroke-width="1"/>
</svg>


<div class="a" style="left:1723px;top:141px;width:25px;height:866px;background:#4b4b4b"></div>

<!-- STATUS BAR -->
<div class="a" style="left:111px;top:1007px;width:1638px;height:25px;background:#4a4a4a"></div>

<!-- STATUS BAR DETAILS -->
<svg style="left:0;top:0" width="1920" height="1080">
 <rect x="112" y="1007" width="1612" height="25" fill="#4e4e4e"/>
 <rect x="117.5" y="1009.5" width="102" height="24" rx="3" fill="#444" stroke="#555"/>
 <rect x="193" y="1010" width="1" height="22" fill="#555"/>
 <path d="M201 1019 l5 5 l5 -5" fill="none" stroke="#e0e0e0" stroke-width="1.6"/>
 <g fill="#777"><rect x="233" y="1015" width="2.5" height="13"/><path d="M245 1015 v13 l-7 -6.5z"/><path d="M271 1015 v13 l-7 -6.5z"/></g>
 <rect x="283.5" y="1009.5" width="86" height="24" rx="3" fill="#444" stroke="#555"/>
 <rect x="343" y="1010" width="1" height="22" fill="#555"/>
 <path d="M350 1019 l5 5 l5 -5" fill="none" stroke="#e0e0e0" stroke-width="1.6"/>
 <g fill="#777"><path d="M385 1015 v13 l7 -6.5z"/><path d="M408 1015 v13 l7 -6.5z"/><rect x="416" y="1015" width="2.5" height="13"/></g>
 <rect x="433" y="1008" width="1" height="24" fill="#444"/>
 <rect x="733" y="1008" width="1" height="24" fill="#444"/>
 <path d="M744 1015 v14 l8 -7z" fill="#d8d8d8"/>
 <rect x="760" y="1007" width="964" height="25" fill="#454545"/>
 <path d="M775 1014 l-5 5 l5 5" fill="none" stroke="#bdbdbd" stroke-width="1.6"/>
 <path d="M1706 1014 l5 5 l-5 5" fill="none" stroke="#bdbdbd" stroke-width="1.6"/>
 <rect x="1224" y="1009" width="37" height="22" rx="11" fill="#5e5e5e"/>
 <rect x="1723" y="1007" width="24" height="24" fill="#535353"/><rect x="111" y="1031" width="1636" height="1" fill="#3a3a3a"/>
</svg>
<div class="t" style="left:122px;top:1015px;font-size:15.6px;color:#ececec">300%</div>
<div class="t" style="left:287px;top:1015px;font-size:15.6px;color:#ececec">1</div>
<div class="t" style="left:553px;top:1014px;font-size:14.4px;color:#cfcfcf">Selection</div>

<!-- RIGHT DOCK -->
<div class="a" style="left:1747px;top:96px;width:3px;height:936px;background:#3e3e3e"></div>
<div class="a" style="left:1750px;top:96px;width:170px;height:19px;background:#434343"></div>
<div class="a" style="left:1750px;top:115px;width:170px;height:917px;background:#535353"></div>

<!-- tab close -->
<svg style="left:0;top:0" width="1920" height="1080">
 <path d="M947 113 l9 9 M956 113 l-9 9" stroke="#e8e8e8" stroke-width="1.8"/>
 <!-- vertical scrollbar arrows -->
 <path d="M1730 157 l6 -6 l6 6" fill="none" stroke="#8c8c8c" stroke-width="1.5"/>
 <path d="M1730 991 l6 6 l6 -6" fill="none" stroke="#8c8c8c" stroke-width="1.5"/>
 <!-- right dock header -->
 <path d="M1904 102 l-3.5 3.5 l3.5 3.5 M1910 102 l-3.5 3.5 l3.5 3.5" fill="none" stroke="#d8d8d8" stroke-width="1.4"/>
 <g fill="#393939">
  <rect x="1820" y="120" width="1" height="6"/><rect x="1823" y="120" width="1" height="6"/><rect x="1826" y="120" width="1" height="6"/><rect x="1829" y="120" width="1" height="6"/><rect x="1832" y="120" width="1" height="6"/><rect x="1835" y="120" width="1" height="6"/><rect x="1838" y="120" width="1" height="6"/><rect x="1841" y="120" width="1" height="6"/><rect x="1844" y="120" width="1" height="6"/><rect x="1847" y="120" width="1" height="6"/>
  <rect x="1820" y="223" width="1" height="6"/><rect x="1823" y="223" width="1" height="6"/><rect x="1826" y="223" width="1" height="6"/><rect x="1829" y="223" width="1" height="6"/><rect x="1832" y="223" width="1" height="6"/><rect x="1835" y="223" width="1" height="6"/><rect x="1838" y="223" width="1" height="6"/><rect x="1841" y="223" width="1" height="6"/><rect x="1844" y="223" width="1" height="6"/><rect x="1847" y="223" width="1" height="6"/>
  <rect x="1820" y="368" width="1" height="6"/><rect x="1823" y="368" width="1" height="6"/><rect x="1826" y="368" width="1" height="6"/><rect x="1829" y="368" width="1" height="6"/><rect x="1832" y="368" width="1" height="6"/><rect x="1835" y="368" width="1" height="6"/><rect x="1838" y="368" width="1" height="6"/><rect x="1841" y="368" width="1" height="6"/><rect x="1844" y="368" width="1" height="6"/><rect x="1847" y="368" width="1" height="6"/>
  <rect x="1820" y="514" width="1" height="6"/><rect x="1823" y="514" width="1" height="6"/><rect x="1826" y="514" width="1" height="6"/><rect x="1829" y="514" width="1" height="6"/><rect x="1832" y="514" width="1" height="6"/><rect x="1835" y="514" width="1" height="6"/><rect x="1838" y="514" width="1" height="6"/><rect x="1841" y="514" width="1" height="6"/><rect x="1844" y="514" width="1" height="6"/><rect x="1847" y="514" width="1" height="6"/>
 </g>
 <g fill="#3e3e3e"><rect x="1750" y="217" width="170" height="2"/><rect x="1750" y="362" width="170" height="2"/><rect x="1750" y="508" width="170" height="2"/><rect x="1750" y="611" width="170" height="2"/></g>
 <rect x="1757.5" y="527.5" width="154" height="33" rx="3" fill="#383838" stroke="#474747"/>
 <!-- color palette icon -->
 <path d="M1781 139 q15 -2 15 7 q0 5 -6 5 q-4 0 -3 4 q0 5 -8 5 q-14 0 -14 -10 q0 -10 16 -11z" fill="#c8c8c8"/>
 <g fill="#535353"><circle cx="1774" cy="148" r="2"/><circle cx="1779" cy="144" r="2"/><circle cx="1786" cy="143" r="2"/><circle cx="1791" cy="147" r="2"/><circle cx="1778" cy="154" r="2.3"/></g>
 <!-- color guide -->
 <path d="M1768 180 v23 h24 q0 -17 -24 -23z" fill="#c8c8c8"/>
 <path d="M1770 185 l18 16 M1770 188 l14 13 M1770 193 l8 8 M1774 183 l16 18" stroke="#8a8a8a" stroke-width="1"/>
 <!-- swatches -->
 <rect x="1767" y="245" width="26" height="17" fill="#c8c8c8"/>
 <g fill="#6e6e6e"><rect x="1769" y="247" width="6" height="6"/><rect x="1777" y="247" width="6" height="6"/><rect x="1785" y="247" width="6" height="6" fill="#999"/><rect x="1769" y="255" width="6" height="5" fill="#999"/><rect x="1777" y="255" width="6" height="5"/><rect x="1785" y="255" width="6" height="5"/></g>
 <!-- brushes -->
 <path d="M1773 294 h14 l-2 15 h-10z" fill="#c8c8c8"/>
 <path d="M1775 294 l-4 -10 M1780 294 v-12 M1784 294 l5 -9" stroke="#c8c8c8" stroke-width="2.2"/>
 <circle cx="1770" cy="284" r="2.5" fill="#c8c8c8"/><circle cx="1789" cy="285" r="3" fill="#c8c8c8"/>
 <!-- symbols club -->
 <circle cx="1780" cy="331" r="5.5" fill="#c8c8c8"/><circle cx="1774" cy="339" r="5.5" fill="#c8c8c8"/><circle cx="1786" cy="339" r="5.5" fill="#c8c8c8"/>
 <path d="M1779 338 h2 l2 9 h-6z" fill="#c8c8c8"/>
 <!-- stroke -->
 <g fill="#c8c8c8"><rect x="1767" y="389" width="26" height="3"/><rect x="1767" y="397" width="26" height="3"/><rect x="1767" y="405" width="26" height="3"/></g>
 <!-- gradient -->
 <defs><linearGradient id="dg" x1="0" x2="1"><stop offset="0" stop-color="#4a4a4a"/><stop offset="1" stop-color="#d0d0d0"/></linearGradient></defs>
 <rect x="1767.5" y="431.5" width="25" height="17" fill="url(#dg)" stroke="#c8c8c8" stroke-width="1.2"/>
 <!-- transparency -->
 <circle cx="1778" cy="478" r="10" fill="#c8c8c8"/>
 <circle cx="1783" cy="489" r="9" fill="#8a8a8a" stroke="#c8c8c8" stroke-width="1.5"/>
 <!-- layers icon -->
 <path d="M1780 536 l13 7 l-13 7 l-13 -7z" fill="#c8c8c8"/>
 <path d="M1767 548 l13 7 l13 -7 v3 l-13 7 l-13 -7z" fill="#c8c8c8"/>
 <!-- artboards -->
 <rect x="1767.5" y="575.5" width="16" height="17" fill="none" stroke="#c8c8c8" stroke-width="1.4"/>
 <rect x="1775.5" y="584.5" width="17" height="17" fill="#535353" stroke="#c8c8c8" stroke-width="1.4"/>
</svg>
<div class="t dock" style="left:1807px;top:143px">Color</div>
<div class="t dock" style="left:1807px;top:185px">Color Guide</div>
<div class="t dock" style="left:1807px;top:247px">Swatches</div>
<div class="t dock" style="left:1807px;top:289px">Brushes</div>
<div class="t dock" style="left:1807px;top:331px">Symbols</div>
<div class="t dock" style="left:1807px;top:392px">Stroke</div>
<div class="t dock" style="left:1807px;top:434px">Gradient</div>
<div class="t dock" style="left:1807px;top:476px">Transparen...</div>
<div class="t dock" style="left:1807px;top:538px;font-size:14.9px">Layers</div>
<div class="t dock" style="left:1807px;top:580px;font-size:15px">Artboards</div>

<!-- LAYERS PANEL -->
<div class="a" style="left:1386px;top:505px;width:363px;height:335px;background:#535353;box-shadow:0 0 2px rgba(0,0,0,0.5)"></div>
<div class="a" style="left:1386px;top:505px;width:363px;height:6px;background:#3a3a3a"></div>
<div class="a" style="left:1386px;top:511px;width:363px;height:41px;background:#434343"></div>
<div class="a" style="left:1387px;top:511px;width:70px;height:41px;background:#535353"></div>
<div class="a" style="left:1457px;top:511px;width:96px;height:41px;background:#464646;border-right:1px solid #3e3e3e"></div>
<div class="t" style="left:1401px;top:523px;font-size:14.9px;font-weight:bold;color:#ececec">Layers</div>
<div class="t" style="left:1470px;top:523px;font-size:15px;font-weight:bold;color:#a8a8a8">Artboards</div>
<div class="a" style="left:1396px;top:561px;width:344px;height:237px;background:#4d4d4d;border:1px solid #464646;border-radius:3px"></div>
<svg style="left:0;top:0" width="1920" height="1080">
<path d="M1687 527 l5 5 l-5 5 M1693 527 l5 5 l-5 5" fill="none" stroke="#e0e0e0" stroke-width="1.4"/>
<rect x="1712" y="524" width="1" height="16" fill="#bdbdbd"/>
<g fill="#e0e0e0"><rect x="1723" y="527" width="16" height="1.3"/><rect x="1723" y="530" width="16" height="1.3"/><rect x="1723" y="533" width="16" height="1.3"/><rect x="1723" y="536" width="16" height="1.3"/></g>
<rect x="1397" y="562" width="342" height="30" fill="#535353"/>
<rect x="1427" y="562" width="1" height="30" fill="#474747"/><rect x="1468" y="562" width="1" height="30" fill="#474747"/>
<rect x="1684" y="562" width="1" height="30" fill="#474747"/>
<rect x="1461" y="565" width="5" height="24" fill="#e8e83a"/>
<path d="M1479 571 l5 6 l-5 6" fill="none" stroke="#e0e0e0" stroke-width="1.5"/>
<rect x="1505" y="564" width="27" height="27" fill="#111"/>
<rect x="1507" y="566" width="23" height="23" fill="#ffffff"/>
<circle cx="1702" cy="577" r="5.5" fill="none" stroke="#d8d8d8" stroke-width="1.5"/>
<rect x="1397" y="593" width="342" height="30" fill="#535353"/>
<rect x="1427" y="593" width="1" height="30" fill="#474747"/><rect x="1468" y="593" width="1" height="30" fill="#474747"/>
<rect x="1684" y="593" width="1" height="30" fill="#474747"/>
<rect x="1461" y="596" width="5" height="24" fill="#44e8f0"/>
<path d="M1479 603 l5 6 l-5 6" fill="none" stroke="#e0e0e0" stroke-width="1.5"/>
<rect x="1505" y="595" width="27" height="27" fill="#111"/>
<rect x="1507" y="597" width="23" height="23" fill="#ffffff"/>
<circle cx="1702" cy="609" r="5.5" fill="none" stroke="#d8d8d8" stroke-width="1.5"/>
<path d="M1402 609 q9.5 -8 19 0 q-9.5 8 -19 0z" fill="#cfcfcf"/><circle cx="1411.5" cy="609" r="3" fill="#535353"/><circle cx="1411.5" cy="609" r="1.5" fill="#cfcfcf"/>
<rect x="1397" y="625" width="342" height="30" fill="#535353"/>
<rect x="1427" y="625" width="1" height="30" fill="#474747"/><rect x="1468" y="625" width="1" height="30" fill="#474747"/>
<rect x="1684" y="625" width="1" height="30" fill="#474747"/>
<rect x="1461" y="628" width="5" height="24" fill="#e845e8"/>
<path d="M1479 634 l5 6 l-5 6" fill="none" stroke="#e0e0e0" stroke-width="1.5"/>
<rect x="1505" y="627" width="27" height="27" fill="#111"/>
<rect x="1507" y="629" width="23" height="23" fill="#ffffff"/>
<circle cx="1702" cy="640" r="5.5" fill="none" stroke="#d8d8d8" stroke-width="1.5"/>
<rect x="1397" y="656" width="342" height="30" fill="#535353"/>
<rect x="1427" y="656" width="1" height="30" fill="#474747"/><rect x="1468" y="656" width="1" height="30" fill="#474747"/>
<rect x="1684" y="656" width="1" height="30" fill="#474747"/>
<rect x="1461" y="659" width="5" height="24" fill="#4f4ff0"/>
<path d="M1479 666 l5 6 l-5 6" fill="none" stroke="#e0e0e0" stroke-width="1.5"/>
<rect x="1505" y="658" width="27" height="27" fill="#111"/>
<rect x="1507" y="660" width="23" height="23" fill="#ffffff"/>
<circle cx="1702" cy="672" r="5.5" fill="none" stroke="#d8d8d8" stroke-width="1.5"/>
<rect x="1397" y="688" width="342" height="30" fill="#535353"/>
<rect x="1427" y="688" width="1" height="30" fill="#474747"/><rect x="1468" y="688" width="1" height="30" fill="#474747"/>
<rect x="1684" y="688" width="1" height="30" fill="#474747"/>
<rect x="1461" y="691" width="5" height="24" fill="#45e845"/>
<path d="M1479 697 l5 6 l-5 6" fill="none" stroke="#e0e0e0" stroke-width="1.5"/>
<rect x="1505" y="690" width="27" height="27" fill="#111"/>
<rect x="1507" y="692" width="23" height="23" fill="#ffffff"/>
<circle cx="1702" cy="703" r="5.5" fill="none" stroke="#d8d8d8" stroke-width="1.5"/>
<rect x="1397" y="719" width="342" height="30" fill="#535353"/>
<rect x="1427" y="719" width="1" height="30" fill="#474747"/><rect x="1468" y="719" width="1" height="30" fill="#474747"/>
<rect x="1684" y="719" width="1" height="30" fill="#474747"/>
<rect x="1461" y="722" width="5" height="24" fill="#f04545"/>
<path d="M1479 729 l5 6 l-5 6" fill="none" stroke="#e0e0e0" stroke-width="1.5"/>
<rect x="1505" y="721" width="27" height="27" fill="#111"/>
<rect x="1507" y="723" width="23" height="23" fill="#ffffff"/>
<circle cx="1702" cy="735" r="5.5" fill="none" stroke="#d8d8d8" stroke-width="1.5"/>
<rect x="1397" y="750" width="342" height="30" fill="#4d6079"/>
<rect x="1427" y="750" width="1" height="30" fill="#474747"/><rect x="1468" y="750" width="1" height="30" fill="#474747"/>
<rect x="1684" y="750" width="1" height="30" fill="#474747"/>
<rect x="1461" y="753" width="5" height="24" fill="#4f7fff"/>
<path d="M1479 760 l5 6 l-5 6" fill="none" stroke="#e0e0e0" stroke-width="1.5"/>
<rect x="1505" y="752" width="27" height="27" fill="#111"/>
<rect x="1507" y="754" width="23" height="23" fill="#ffffff"/>
<circle cx="1702" cy="766" r="5.5" fill="none" stroke="#d8d8d8" stroke-width="1.5"/>
<path d="M1402 766 q9.5 -8 19 0 q-9.5 8 -19 0z" fill="#cfcfcf"/><circle cx="1411.5" cy="766" r="3" fill="#4d6079"/><circle cx="1411.5" cy="766" r="1.5" fill="#cfcfcf"/>
<g fill="#474747"><rect x="1397" y="592" width="342" height="1"/><rect x="1397" y="624" width="342" height="1"/><rect x="1397" y="655" width="342" height="1"/><rect x="1397" y="687" width="342" height="1"/><rect x="1397" y="718" width="342" height="1"/><rect x="1397" y="749" width="342" height="1"/><rect x="1397" y="781" width="342" height="1"/></g>
<path d="M1725 751 h13 v13z" fill="#cfcfcf"/>
<g fill="#3b2b2b"><circle cx="1514.4" cy="566.8" r="1.3"/><circle cx="1508.7" cy="573.5" r="0.9"/><circle cx="1508.3" cy="572.8" r="0.4"/><circle cx="1517.0" cy="566.2" r="0.4"/><circle cx="1516.8" cy="582.3" r="0.5"/><circle cx="1512.1" cy="575.9" r="1.8"/><circle cx="1520.3" cy="570.4" r="1.9"/><circle cx="1508.1" cy="583.5" r="0.8"/><circle cx="1510.3" cy="566.5" r="0.8"/><circle cx="1525.8" cy="567.1" r="1.2"/><circle cx="1521.7" cy="569.9" r="1.2"/><circle cx="1508.4" cy="566.1" r="0.6"/><circle cx="1522.6" cy="571.0" r="0.8"/><circle cx="1520.5" cy="571.5" r="0.8"/><circle cx="1525.3" cy="578.1" r="0.7"/><circle cx="1520.2" cy="573.2" r="1.7"/><circle cx="1523.8" cy="568.4" r="1.9"/><circle cx="1509.7" cy="570.8" r="1.5"/><circle cx="1510.5" cy="572.3" r="0.4"/><circle cx="1522.4" cy="580.2" r="1.2"/><circle cx="1527.1" cy="568.9" r="1.4"/><circle cx="1520.7" cy="574.6" r="1.0"/><circle cx="1526.3" cy="586.8" r="1.1"/><circle cx="1522.3" cy="566.1" r="1.4"/><circle cx="1521.9" cy="588.7" r="1.6"/><circle cx="1513.5" cy="570.1" r="1.4"/><circle cx="1507.5" cy="571.7" r="0.6"/><circle cx="1509.7" cy="566.1" r="1.5"/><circle cx="1510.0" cy="567.9" r="0.9"/><circle cx="1527.0" cy="566.2" r="1.0"/><circle cx="1519.6" cy="584.4" r="1.6"/><circle cx="1526.9" cy="568.3" r="1.0"/><circle cx="1515.3" cy="584.4" r="1.8"/><circle cx="1510.5" cy="567.0" r="0.7"/><circle cx="1512.4" cy="572.3" r="1.2"/><circle cx="1513.0" cy="566.0" r="1.0"/><circle cx="1515.5" cy="574.3" r="1.8"/><circle cx="1522.9" cy="573.0" r="1.3"/><circle cx="1522.6" cy="566.1" r="1.7"/><circle cx="1524.9" cy="584.1" r="1.6"/><circle cx="1516.0" cy="570.4" r="0.5"/><circle cx="1521.6" cy="566.2" r="0.4"/><circle cx="1511.8" cy="566.9" r="0.8"/><circle cx="1508.2" cy="566.0" r="0.5"/><circle cx="1509.3" cy="569.7" r="0.3"/><circle cx="1527.1" cy="575.6" r="0.5"/><circle cx="1512.8" cy="569.4" r="0.9"/><circle cx="1509.8" cy="583.1" r="1.9"/><circle cx="1517.7" cy="572.2" r="0.4"/><circle cx="1509.4" cy="569.3" r="0.7"/><circle cx="1526.1" cy="566.9" r="0.3"/><circle cx="1528.9" cy="573.3" r="0.5"/><circle cx="1519.5" cy="566.0" r="1.1"/><circle cx="1529.5" cy="583.7" r="1.4"/><circle cx="1513.0" cy="569.8" r="0.6"/><circle cx="1524.8" cy="573.4" r="1.5"/><circle cx="1514.6" cy="567.5" r="1.6"/><circle cx="1529.7" cy="583.3" r="1.6"/><circle cx="1525.8" cy="579.4" r="0.7"/><circle cx="1518.9" cy="569.6" r="0.3"/><circle cx="1507.6" cy="568.3" r="0.7"/><circle cx="1522.9" cy="587.2" r="1.0"/><circle cx="1528.6" cy="588.5" r="1.8"/><circle cx="1515.4" cy="567.5" r="0.7"/><circle cx="1511.5" cy="567.3" r="1.3"/><circle cx="1527.7" cy="582.8" r="1.1"/><circle cx="1522.0" cy="581.4" r="0.4"/><circle cx="1522.2" cy="585.4" r="1.6"/><circle cx="1524.3" cy="572.1" r="0.6"/><circle cx="1525.2" cy="569.2" r="1.6"/><circle cx="1529.3" cy="570.3" r="0.9"/><circle cx="1528.8" cy="578.9" r="0.6"/><circle cx="1509.9" cy="566.8" r="1.7"/><circle cx="1525.5" cy="566.7" r="1.6"/><circle cx="1529.5" cy="576.8" r="0.9"/><circle cx="1519.6" cy="566.6" r="0.3"/><circle cx="1529.3" cy="576.6" r="1.1"/><circle cx="1528.5" cy="571.1" r="1.7"/><circle cx="1526.0" cy="567.4" r="0.7"/><circle cx="1513.7" cy="567.8" r="1.2"/><circle cx="1513.0" cy="570.8" r="0.5"/><circle cx="1527.9" cy="569.5" r="1.0"/><circle cx="1520.4" cy="585.2" r="1.0"/><circle cx="1528.1" cy="572.6" r="1.2"/><circle cx="1519.0" cy="566.0" r="1.0"/><circle cx="1511.2" cy="566.0" r="1.6"/><circle cx="1511.0" cy="572.0" r="1.5"/><circle cx="1519.8" cy="569.1" r="1.1"/><circle cx="1519.8" cy="580.9" r="0.5"/><circle cx="1519.9" cy="567.9" r="0.7"/><circle cx="1524.8" cy="572.8" r="1.2"/><circle cx="1524.5" cy="585.5" r="1.0"/><circle cx="1521.1" cy="572.7" r="1.1"/><circle cx="1522.9" cy="571.5" r="1.2"/><circle cx="1518.0" cy="586.6" r="1.4"/><circle cx="1527.2" cy="586.7" r="0.7"/><circle cx="1519.9" cy="586.7" r="1.6"/><circle cx="1510.2" cy="566.5" r="1.0"/><circle cx="1508.7" cy="567.8" r="0.4"/><circle cx="1522.4" cy="580.8" r="1.7"/><circle cx="1510.6" cy="578.6" r="1.4"/><circle cx="1510.3" cy="584.4" r="1.8"/><circle cx="1512.1" cy="587.1" r="0.9"/><circle cx="1518.2" cy="588.6" r="1.6"/><circle cx="1510.7" cy="571.1" r="1.1"/><circle cx="1514.8" cy="567.2" r="0.8"/><circle cx="1523.6" cy="566.0" r="1.2"/><circle cx="1517.1" cy="566.0" r="0.8"/><circle cx="1521.4" cy="572.9" r="0.4"/><circle cx="1529.7" cy="581.0" r="1.9"/></g>
<g fill="#bdb5ae"><path fill-rule="evenodd" d="M1507 597 h23 v23 h-23z M1510 601 h17 v15 h-17z" fill="#cfc8c2"/><circle cx="1509.4" cy="603.1" r="0.4"/><circle cx="1524.9" cy="603.2" r="0.5"/><circle cx="1516.7" cy="618.0" r="1.4"/><circle cx="1512.9" cy="600.4" r="1.5"/><circle cx="1520.1" cy="613.1" r="0.4"/><circle cx="1508.3" cy="612.8" r="0.9"/><circle cx="1508.7" cy="618.6" r="1.1"/><circle cx="1525.4" cy="598.9" r="1.4"/><circle cx="1508.5" cy="616.8" r="0.9"/><circle cx="1514.8" cy="609.7" r="1.5"/><circle cx="1513.2" cy="600.0" r="1.0"/><circle cx="1512.5" cy="599.5" r="0.5"/><circle cx="1508.2" cy="601.6" r="0.7"/><circle cx="1514.0" cy="614.5" r="0.7"/><circle cx="1518.5" cy="601.1" r="0.8"/><circle cx="1507.4" cy="602.8" r="0.3"/><circle cx="1523.9" cy="609.7" r="0.5"/><circle cx="1517.9" cy="618.5" r="0.4"/><circle cx="1525.8" cy="606.9" r="0.9"/><circle cx="1526.2" cy="606.0" r="1.0"/><circle cx="1522.8" cy="619.6" r="0.7"/><circle cx="1526.1" cy="613.3" r="1.1"/><circle cx="1516.3" cy="605.0" r="0.4"/><circle cx="1510.0" cy="598.6" r="1.3"/><circle cx="1512.9" cy="600.8" r="0.4"/><circle cx="1526.3" cy="617.0" r="1.2"/><circle cx="1513.5" cy="602.6" r="0.7"/><circle cx="1517.6" cy="600.6" r="0.9"/><circle cx="1513.1" cy="619.1" r="1.6"/><circle cx="1519.6" cy="602.6" r="1.6"/><circle cx="1514.1" cy="605.2" r="0.3"/><circle cx="1515.8" cy="607.9" r="1.0"/><circle cx="1511.6" cy="608.6" r="0.3"/><circle cx="1513.1" cy="599.1" r="0.8"/><circle cx="1508.0" cy="597.5" r="0.7"/></g>
<g fill="#3d3535"><circle cx="1512.4" cy="642.5" r="1.1"/><circle cx="1524.3" cy="644.1" r="1.4"/><circle cx="1527.2" cy="638.0" r="0.8"/><circle cx="1529.6" cy="632.4" r="1.4"/><circle cx="1521.8" cy="630.0" r="1.6"/><circle cx="1527.5" cy="643.4" r="1.4"/><circle cx="1525.7" cy="632.2" r="1.1"/><circle cx="1518.6" cy="648.2" r="1.5"/><circle cx="1526.0" cy="642.4" r="1.6"/><circle cx="1522.7" cy="644.9" r="0.6"/><circle cx="1507.7" cy="632.1" r="0.8"/><circle cx="1509.4" cy="648.2" r="1.1"/><circle cx="1521.4" cy="643.4" r="1.3"/><circle cx="1518.3" cy="629.1" r="1.5"/><circle cx="1524.2" cy="640.6" r="1.1"/><circle cx="1522.2" cy="630.5" r="1.4"/><circle cx="1512.8" cy="630.7" r="0.7"/><circle cx="1523.8" cy="633.7" r="1.4"/><circle cx="1529.4" cy="640.4" r="0.9"/><circle cx="1518.0" cy="644.7" r="1.5"/><circle cx="1521.2" cy="643.8" r="0.4"/><circle cx="1510.4" cy="634.8" r="1.4"/><circle cx="1514.0" cy="642.1" r="0.3"/><circle cx="1508.4" cy="635.2" r="1.3"/><circle cx="1522.9" cy="644.5" r="0.7"/><circle cx="1518.9" cy="639.7" r="1.0"/><circle cx="1509.7" cy="649.6" r="0.6"/><circle cx="1529.5" cy="650.5" r="0.3"/><circle cx="1517.6" cy="647.9" r="1.8"/><circle cx="1517.3" cy="635.2" r="0.6"/><circle cx="1528.7" cy="633.8" r="1.2"/><circle cx="1510.3" cy="641.1" r="1.7"/><circle cx="1510.0" cy="647.9" r="1.1"/><circle cx="1527.4" cy="645.2" r="0.6"/><circle cx="1527.6" cy="640.2" r="0.3"/><circle cx="1507.1" cy="640.3" r="1.0"/><circle cx="1513.9" cy="632.2" r="0.8"/><circle cx="1514.3" cy="648.3" r="0.3"/><circle cx="1524.3" cy="648.3" r="0.5"/><circle cx="1528.3" cy="645.4" r="1.7"/><circle cx="1513.7" cy="637.6" r="0.9"/><circle cx="1530.0" cy="642.6" r="0.8"/><circle cx="1516.8" cy="635.3" r="0.4"/><circle cx="1509.3" cy="648.2" r="0.7"/><circle cx="1528.5" cy="634.7" r="0.7"/><circle cx="1518.8" cy="633.4" r="0.9"/><circle cx="1529.0" cy="649.3" r="1.5"/><circle cx="1521.5" cy="650.0" r="1.7"/><circle cx="1519.6" cy="645.6" r="0.4"/><circle cx="1523.8" cy="639.4" r="1.4"/><circle cx="1521.8" cy="635.6" r="0.4"/><circle cx="1528.3" cy="631.9" r="1.0"/><circle cx="1514.9" cy="635.8" r="1.4"/><circle cx="1529.5" cy="635.0" r="1.3"/><circle cx="1513.9" cy="641.8" r="0.9"/><circle cx="1510.8" cy="632.7" r="0.6"/><circle cx="1527.8" cy="640.4" r="0.6"/><circle cx="1527.8" cy="651.9" r="1.0"/><circle cx="1510.2" cy="633.4" r="0.4"/><circle cx="1514.9" cy="631.1" r="0.7"/><circle cx="1512.9" cy="642.1" r="1.6"/><circle cx="1524.2" cy="638.5" r="0.9"/><circle cx="1519.1" cy="637.7" r="0.8"/><circle cx="1508.4" cy="635.4" r="1.8"/><circle cx="1509.9" cy="640.6" r="1.2"/><circle cx="1526.8" cy="634.0" r="0.7"/><circle cx="1512.7" cy="638.2" r="1.0"/><circle cx="1528.9" cy="648.5" r="1.6"/><circle cx="1507.5" cy="629.7" r="1.4"/><circle cx="1527.6" cy="639.9" r="1.2"/><circle cx="1507.0" cy="638.0" r="1.7"/><circle cx="1526.0" cy="648.7" r="1.8"/><circle cx="1512.7" cy="631.5" r="0.5"/><circle cx="1519.0" cy="644.7" r="1.7"/><circle cx="1523.6" cy="643.9" r="1.4"/></g>
<g fill="#e0dad5"><circle cx="1517.5" cy="672.7" r="0.3"/><circle cx="1525.0" cy="665.3" r="1.2"/><circle cx="1521.8" cy="667.0" r="0.4"/><circle cx="1512.8" cy="674.6" r="1.0"/><circle cx="1509.6" cy="661.6" r="0.8"/><circle cx="1520.4" cy="668.9" r="0.5"/><circle cx="1520.8" cy="660.2" r="0.6"/><circle cx="1517.6" cy="682.1" r="0.9"/><circle cx="1527.3" cy="670.9" r="0.5"/><circle cx="1512.7" cy="682.1" r="1.0"/><circle cx="1514.1" cy="660.5" r="0.8"/><circle cx="1522.5" cy="669.7" r="0.6"/><circle cx="1522.3" cy="681.3" r="0.5"/><circle cx="1507.8" cy="667.8" r="0.7"/><circle cx="1522.7" cy="664.6" r="1.1"/></g>
<g fill="#6a6262"><circle cx="1524.0" cy="703.6" r="0.5"/><circle cx="1529.3" cy="699.2" r="1.3"/><circle cx="1512.3" cy="697.1" r="1.2"/><circle cx="1513.8" cy="713.9" r="0.9"/><circle cx="1511.3" cy="697.1" r="0.8"/><circle cx="1522.3" cy="713.8" r="0.5"/><circle cx="1516.0" cy="696.9" r="1.5"/><circle cx="1510.3" cy="693.2" r="0.4"/><circle cx="1516.0" cy="712.7" r="1.4"/><circle cx="1523.9" cy="714.9" r="1.4"/><circle cx="1514.6" cy="696.3" r="1.4"/><circle cx="1524.2" cy="692.7" r="1.1"/><circle cx="1515.7" cy="700.6" r="0.7"/><circle cx="1510.9" cy="692.1" r="0.6"/><circle cx="1515.1" cy="714.0" r="0.4"/><circle cx="1529.2" cy="696.8" r="0.7"/><circle cx="1525.9" cy="710.9" r="0.8"/><circle cx="1508.1" cy="702.9" r="0.7"/><circle cx="1528.1" cy="696.4" r="0.7"/><circle cx="1527.6" cy="692.7" r="0.8"/><circle cx="1525.7" cy="709.6" r="0.3"/><circle cx="1507.8" cy="693.4" r="1.4"/><circle cx="1512.9" cy="709.2" r="1.4"/><circle cx="1514.8" cy="698.3" r="1.4"/><circle cx="1521.2" cy="698.0" r="1.2"/><circle cx="1514.3" cy="698.3" r="0.3"/><circle cx="1524.4" cy="713.1" r="1.1"/><circle cx="1528.7" cy="692.6" r="0.6"/><circle cx="1517.9" cy="714.0" r="1.4"/><circle cx="1515.9" cy="697.8" r="0.8"/><circle cx="1518.3" cy="713.3" r="0.5"/><circle cx="1525.5" cy="709.0" r="1.3"/><circle cx="1524.8" cy="706.0" r="0.7"/><circle cx="1514.3" cy="700.3" r="1.2"/><circle cx="1508.8" cy="696.5" r="1.2"/><circle cx="1512.7" cy="693.5" r="0.3"/><circle cx="1519.7" cy="699.5" r="1.5"/><circle cx="1527.3" cy="714.7" r="0.6"/><circle cx="1508.9" cy="694.2" r="0.9"/><circle cx="1523.3" cy="702.3" r="0.6"/><circle cx="1516.6" cy="706.3" r="1.1"/><circle cx="1524.2" cy="711.5" r="1.1"/><circle cx="1509.8" cy="711.3" r="0.7"/><circle cx="1520.0" cy="700.6" r="1.2"/><circle cx="1511.6" cy="697.7" r="0.6"/></g>
<g fill="#d43a22"><circle cx="1514.1" cy="739.4" r="1.1"/><circle cx="1516.6" cy="732.5" r="1.7"/><circle cx="1519.1" cy="730.2" r="1.4"/><circle cx="1521.1" cy="740.9" r="0.4"/><circle cx="1518.6" cy="738.5" r="1.5"/><circle cx="1524.8" cy="727.6" r="0.7"/><circle cx="1513.7" cy="729.7" r="1.7"/><circle cx="1520.2" cy="740.0" r="0.8"/><circle cx="1524.1" cy="733.3" r="0.7"/><circle cx="1522.9" cy="740.2" r="0.4"/><circle cx="1520.3" cy="735.7" r="0.6"/><circle cx="1517.2" cy="729.0" r="0.6"/><circle cx="1515.6" cy="735.4" r="1.2"/><circle cx="1514.8" cy="727.2" r="0.8"/><circle cx="1521.5" cy="729.6" r="0.7"/><circle cx="1514.8" cy="738.1" r="1.1"/><circle cx="1512.9" cy="728.4" r="0.9"/><circle cx="1519.7" cy="735.9" r="0.4"/><circle cx="1514.3" cy="736.7" r="0.9"/><circle cx="1516.0" cy="731.3" r="1.6"/><circle cx="1516.4" cy="734.9" r="0.8"/><circle cx="1517.8" cy="739.1" r="1.7"/><circle cx="1517.1" cy="729.8" r="1.3"/><circle cx="1514.9" cy="727.1" r="1.6"/><circle cx="1517.9" cy="738.5" r="0.9"/><circle cx="1524.4" cy="733.5" r="0.5"/><circle cx="1512.2" cy="734.7" r="1.2"/><circle cx="1524.7" cy="728.2" r="1.2"/><circle cx="1517.2" cy="734.1" r="0.5"/><circle cx="1516.0" cy="734.3" r="1.6"/><circle cx="1513.5" cy="733.9" r="1.4"/><circle cx="1525.5" cy="729.8" r="0.5"/><circle cx="1525.2" cy="740.7" r="1.0"/><circle cx="1512.7" cy="740.0" r="0.8"/><circle cx="1524.7" cy="735.7" r="1.5"/><circle cx="1514.2" cy="738.0" r="0.6"/><circle cx="1517.7" cy="738.8" r="1.5"/><circle cx="1514.6" cy="730.1" r="0.9"/><circle cx="1519.3" cy="732.4" r="0.5"/><circle cx="1515.5" cy="737.1" r="1.6"/><circle cx="1512.6" cy="734.9" r="1.4"/><circle cx="1512.5" cy="738.7" r="0.5"/><circle cx="1520.4" cy="734.7" r="1.2"/><circle cx="1516.3" cy="732.9" r="1.1"/><circle cx="1518.0" cy="736.2" r="0.9"/></g>
<path d="M1495 806 v15 h15 v-5 M1503 806 h7 v7 M1510 806 l-8 8" fill="none" stroke="#cfcfcf" stroke-width="1.6"/>
<circle cx="1545" cy="811" r="5" fill="none" stroke="#777" stroke-width="1.8"/><path d="M1541 815 l-5 5" stroke="#777" stroke-width="2"/>
<rect x="1573" y="806" width="10" height="10" fill="none" stroke="#cfcfcf" stroke-width="1.5"/><rect x="1578" y="811" width="10" height="10" fill="#888" stroke="#cfcfcf" stroke-width="1.5"/>
<path d="M1611 807 l5 5 l4 -4 M1617 812 h-6" fill="none" stroke="#cfcfcf" stroke-width="1.5"/><path d="M1620 807 h8 v13 h-5 l-4 -4z" fill="#cfcfcf"/>
<path d="M1652 806 h14 v14 h-9 v-5 h-5z" fill="#cfcfcf"/><path d="M1652 815 l5 5" stroke="#535353" stroke-width="1"/>
<path d="M1690 808 h16 M1695 808 v-3 h6 v3" fill="none" stroke="#cfcfcf" stroke-width="1.5"/><path d="M1692 810 h12 l-1 12 h-10z" fill="none" stroke="#cfcfcf" stroke-width="1.6"/><path d="M1696 812 v8 M1700 812 v8" stroke="#cfcfcf" stroke-width="1.2"/>
<rect x="1386" y="829" width="363" height="11" fill="#3a3a3a"/>
<g fill="#6e6e6e"><rect x="1553" y="831" width="1" height="6"/><rect x="1556" y="831" width="1" height="6"/><rect x="1559" y="831" width="1" height="6"/><rect x="1562" y="831" width="1" height="6"/><rect x="1565" y="831" width="1" height="6"/><rect x="1568" y="831" width="1" height="6"/><rect x="1571" y="831" width="1" height="6"/><rect x="1574" y="831" width="1" height="6"/><rect x="1577" y="831" width="1" height="6"/><rect x="1580" y="831" width="1" height="6"/></g>
</svg>
<div class="t" style="left:1540px;top:569px;font-size:15.5px;color:#e6e6e6">Layer 7</div>
<div class="t" style="left:1540px;top:601px;font-size:15.5px;color:#e6e6e6">Layer 6</div>
<div class="t" style="left:1540px;top:632px;font-size:15.5px;color:#e6e6e6">Layer 5</div>
<div class="t" style="left:1540px;top:664px;font-size:15.5px;color:#e6e6e6">Layer 4</div>
<div class="t" style="left:1540px;top:695px;font-size:15.5px;color:#e6e6e6">Layer 3</div>
<div class="t" style="left:1540px;top:727px;font-size:15.5px;color:#e6e6e6">Layer 2</div>
<div class="t" style="left:1540px;top:758px;font-size:15.5px;color:#e6e6e6">Layer 1</div>
<div class="t" style="left:1395px;top:807px;font-size:14.4px;color:#cfcfcf">7 La...</div>
<!-- TASKBAR -->
<div class="a" style="left:0;top:1032px;width:1920px;height:48px;background:linear-gradient(90deg,#2c4150 0px,#30465a 150px,#34495a 300px,#3a5058 420px,#4a6262 500px,#3d6a64 640px,#356f66 800px,#33706a 1100px,#34716b 1500px,#317069 1920px)"></div>
<svg style="left:0;top:0" width="1920" height="1080">
 <!-- landscape features -->
 <path d="M470 1033 h110 v10 h-110z" fill="#7a5048" opacity="0.75"/>
 <path d="M490 1042 h80 v15 l-80 8z" fill="#8a8050" opacity="0.7"/>
 <path d="M425 1048 l40 -4 l5 22 l-45 6z" fill="#9aa4aa" opacity="0.55"/>
 <path d="M580 1033 h140 l-20 8 h-120z" fill="#5a6a6a" opacity="0.5"/>
 <path d="M420 1080 l60 -18 l140 -26 l100 -4 v6 l-110 10 l-120 26 l-20 6z" fill="#40705e" opacity="0.7"/>
 <path d="M520 1075 q60 -20 130 -30 q60 -6 120 -10 l-10 6 q-80 8 -150 20 q-50 10 -90 20z" fill="#707880" opacity="0.45"/>
 <path d="M680 1036 q30 3 45 -2 l-10 8 q-25 4 -40 2z" fill="#6a7680" opacity="0.6"/>
 <path d="M770 1080 q20 -10 50 -8 q40 -3 70 8z" fill="#6e7882" opacity="0.6"/>
 <path d="M1005 1068 q40 -18 75 -32 h60 q-40 10 -70 20 q-35 10 -65 12z" fill="#6a7480" opacity="0.55"/>
 <path d="M1590 1034 q80 10 160 30 l-10 4 q-70 -20 -150 -30z" fill="#3e5a5a" opacity="0.35"/>
 <path d="M0 1032 h1920 v1 h-1920z" fill="#2a2a2a" opacity="0.6"/>
<!-- windows logo -->
 <g fill="#ffffff"><path d="M13 1043 l13 -2 v13 h-13z"/><path d="M28 1041 l17 -3 v16 h-17z"/><path d="M13 1056 h13 v13 l-13 -2z"/><path d="M28 1056 h17 v16 l-17 -3z"/></g>
 <!-- buttons -->
 <rect x="62.5" y="1033.5" width="68" height="45" fill="#9aa4a8" fill-opacity="0.25" stroke="#b0b8bc" stroke-opacity="0.45"/>
 <rect x="208.5" y="1033.5" width="68" height="45" fill="#b8c0c4" fill-opacity="0.4" stroke="#d8dcde" stroke-opacity="0.8"/>
 <rect x="281.5" y="1033.5" width="68" height="45" fill="#9aa4a8" fill-opacity="0.25" stroke="#b0b8bc" stroke-opacity="0.45"/>
 <rect x="354.5" y="1033.5" width="68" height="45" fill="#9aa4a8" fill-opacity="0.25" stroke="#b0b8bc" stroke-opacity="0.45"/>
 <!-- chrome -->
 <circle cx="95.5" cy="1056" r="18.5" fill="#db4437"/>
 <path d="M95.5 1056 L79.5 1065.25 A18.5 18.5 0 0 1 79.5 1046.75 Z" fill="#0f9d58"/>
 <path d="M95.5 1056 L79.5 1046.75 A18.5 18.5 0 0 1 95.5 1037.5 L111.5 1046.75 Z" fill="#db4437"/>
 <path d="M95.5 1056 L111.5 1046.75 A18.5 18.5 0 0 1 95.5 1074.5 Z" fill="#f4b400"/>
 <path d="M95.5 1056 L95.5 1074.5 A18.5 18.5 0 0 1 79.5 1065.25 Z" fill="#0f9d58"/>
 <circle cx="95.5" cy="1056" r="8" fill="#fff"/><circle cx="95.5" cy="1056" r="6.3" fill="#4285f4"/>
 <!-- explorer -->
 <path d="M150 1040 h14 l3 3 h21 v27 h-38z" fill="#e8c25a"/>
 <rect x="152" y="1044" width="34" height="8" fill="#fdf3c8"/>
 <path d="M150 1050 h38 v20 h-38z" fill="#f5d46a"/>
 <path d="M157 1060 h24 l3 10 h-30z" fill="#5ab0e0"/>
 <rect x="160" y="1066" width="18" height="4" fill="#e8e8e8"/>
 <!-- Ai -->
 <rect x="223" y="1037" width="37" height="35" fill="#ff7c00"/>
 <rect x="225.5" y="1039.5" width="32" height="30" fill="#2a1200"/>
 <text x="227" y="1064" font-family="Liberation Sans" font-size="20" fill="#ff8a00">Ai</text>
 <!-- Ps -->
 <rect x="296" y="1037" width="37" height="35" fill="#20c0ff"/>
 <rect x="298.5" y="1039.5" width="32" height="30" fill="#001a2e"/>
 <text x="300" y="1064" font-family="Liberation Sans" font-size="20" fill="#31c5f0">Ps</text>
 <!-- autocad -->
 <defs><linearGradient id="acg" x1="0" y1="0" x2="1" y2="1"><stop offset="0" stop-color="#d81e2a"/><stop offset="1" stop-color="#ffe0e0"/></linearGradient></defs>
 <rect x="368" y="1036" width="40" height="37" fill="url(#acg)"/>
 <path d="M388 1040 l13 23 l-13 -4 l-13 4z" fill="#9a1010"/>
 <path d="M388 1040 l13 23 l-13 -4z" fill="#c42020"/>
 <path d="M380 1058 h16" stroke="#e05050" stroke-width="1"/>
 <!-- tray -->
 <path d="M1563 1059 l5 -4 l5 4z" fill="#fff"/>
 <path d="M1592 1048 v17" stroke="#fff" stroke-width="1.5"/>
 <path d="M1593 1049 q4 -1 8 1 q4 2 8 1 v7 q-4 1 -8 -1 q-4 -2 -8 -1z" fill="#fff"/>
 <rect x="1621" y="1047" width="20" height="20" fill="#e41e26"/>
 <path d="M1625 1063 q4 -12 7 -12 q2 0 2 6 q1 5 4 5 M1627 1059 q5 -2 10 1" fill="none" stroke="#fff" stroke-width="1.8"/>
 <path d="M1656 1048 l5 3 l-5 3 l-5 -3z M1666 1048 l5 3 l-5 3 l-5 -3z M1656 1054 l5 3 l-5 3 l-5 -3z M1666 1054 l5 3 l-5 3 l-5 -3z M1661 1061 l4 2 l-4 2 l-4 -2z" fill="#fff"/>
 <path d="M1683 1048 v17 M1681 1052 h4" stroke="#fff" stroke-width="1.3"/>
 <rect x="1689.5" y="1049.5" width="10" height="16" fill="none" stroke="#fff" stroke-width="1.3"/>
 <rect x="1691" y="1057" width="7" height="7" fill="#fff"/>
 <path d="M1712 1066 h3 v-4 h-3z M1717 1066 h3 v-7 h-3z" fill="#fff"/>
 <path d="M1722 1066 h2.5 v-10 h-2.5z M1726 1066 h2 v-14 h-2z" fill="#aab"/>
 <path d="M1741 1053 h4 l6 -5 v18 l-6 -5 h-4z" fill="#fff"/>
 <path d="M1754 1053 q2 4 0 8 M1757 1051 q3 6 0 12" fill="none" stroke="#fff" stroke-width="1.2"/>
</svg>
<div class="t" style="left:1780px;top:1050px;font-size:15px;color:#fff">SRP</div>
<div class="t" style="left:1846px;top:1040px;font-size:15.5px;color:#fff">15:00</div>
<div class="t" style="left:1829px;top:1061px;font-size:15.5px;color:#fff">17-Apr-18</div>


</body></html>
